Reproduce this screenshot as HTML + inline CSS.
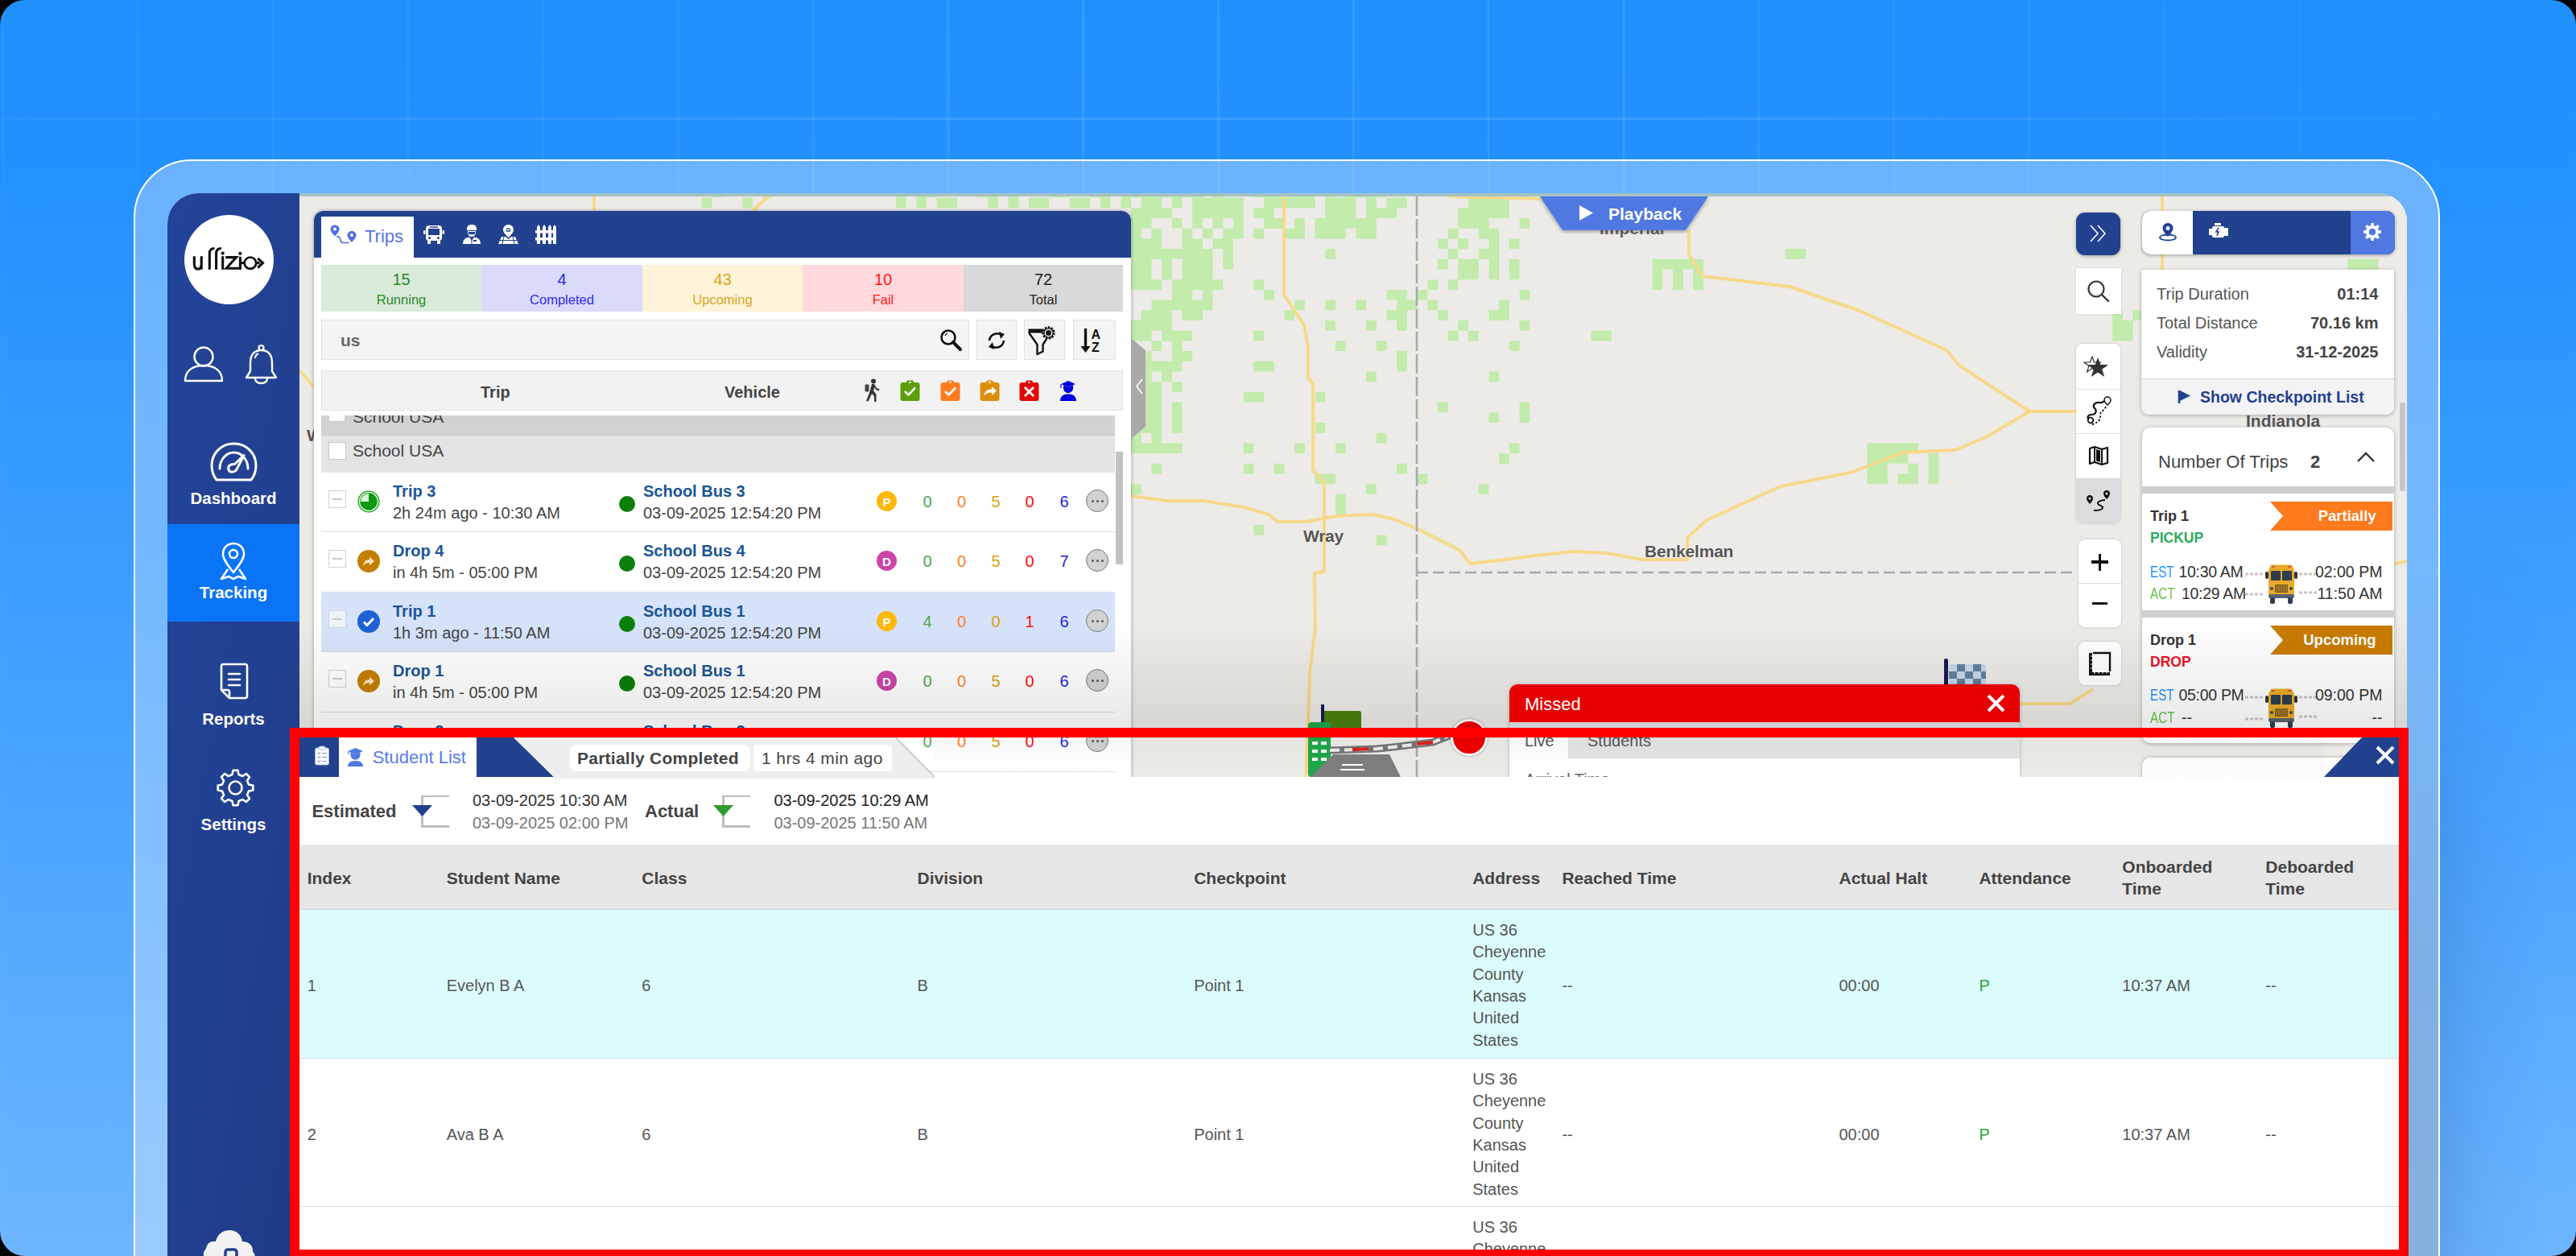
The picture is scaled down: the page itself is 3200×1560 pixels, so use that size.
<!DOCTYPE html>
<html><head><meta charset="utf-8">
<style>
*{box-sizing:border-box;margin:0;padding:0}
html,body{width:3200px;height:1560px;overflow:hidden;background:#000}
body{position:relative;font-family:"Liberation Sans",sans-serif;color:#444}
.a{position:absolute}
#bg{left:0;top:0;width:3200px;height:1560px;border-radius:31px;overflow:hidden;
 background:linear-gradient(180deg,#2190FF 0px,#2291FF 200px,#4AA5FF 1000px,#6DB5FF 1560px)}
.grid{left:1.5px;top:0;width:3200px;height:1560px;
 background-image:linear-gradient(90deg,rgba(255,255,255,.09) 0,rgba(255,255,255,.09) 3px,transparent 3px);
 background-size:167.8px 100%;-webkit-mask-image:linear-gradient(90deg,rgba(0,0,0,.3) 0,rgba(0,0,0,.55) 20%,#000 38%,#000 64%,rgba(0,0,0,.45) 80%,rgba(0,0,0,.12) 95%)}
.gridh{left:0;top:146px;width:3200px;height:3px;background:rgba(255,255,255,.12);-webkit-mask-image:linear-gradient(90deg,rgba(0,0,0,.3) 0,rgba(0,0,0,.55) 20%,#000 38%,#000 64%,rgba(0,0,0,.45) 80%,rgba(0,0,0,.12) 95%)}
.t{position:absolute;white-space:nowrap;line-height:1}
.sbt{color:#fff;font-weight:700;font-size:20.5px;width:164px;left:208px;text-align:center}
#lp{left:166px;top:198px;width:2865px;height:1700px;border:2px solid #fff;border-radius:72px;
 background:linear-gradient(180deg,#6AB2FF 0px,#74B8FF 500px,#9ACBFF 1362px,#9ACBFF 1700px)}
#app{left:208px;top:240px;width:2782px;height:1400px;border-radius:38px 35px 0 0;overflow:hidden;background:#EDEBE7}
#side{left:0;top:0;width:164px;height:1400px;background:linear-gradient(100deg,#23449A 0%,#22408F 60%,#1F3A86 100%)}
#map{left:164px;top:0;width:2618px;height:1400px;background:#EDEBE7;overflow:hidden;border-top:4px solid #A3C2C4}
</style></head><body>
<div id="bg" class="a"></div>
<div id="lp" class="a"></div>
<div class="a grid"></div><div class="a gridh"></div>
<div id="app" class="a">
 <div id="side" class="a"></div>
 <div id="map" class="a"></div>
</div>

<!-- SIDEBAR -->
<div class="a" style="left:208px;top:651px;width:164px;height:121px;background:#0A74F6"></div>
<div class="a" style="left:229px;top:267px;width:111px;height:111px;border-radius:50%;background:#fff"></div>
<svg class="a" style="left:225px;top:265px" width="120" height="120" viewBox="0 0 120 120"><g fill="none" stroke="#111" stroke-width="3.1">
<path d="M16.3 53.2V62.5C16.3 67.3 18.3 69.2 21 69.2C23.6 69.2 25.2 67.3 25.2 62.5M25.2 53.2V69.8"/>
<path d="M35.3 69.8V50C35.3 45.3 37.3 43.5 41.5 43.5"/><path d="M43.6 69.8V50C43.6 45.3 45.6 43.5 49.8 43.5"/>
<path d="M51.7 53.2V69.8"/><path d="M55.2 54.6H68.5L56.2 68.3H75"/><path d="M73.4 53.8V69.8"/>
<path d="M74.9 61.6H78.5"/><circle cx="85.9" cy="61.7" r="7.2" stroke-width="2.7"/><path d="M93 61.6H97.5"/><path d="M95.2 55.8L101.4 61.6L95.2 67.5" stroke-width="3.2"/></g>
<circle cx="51.7" cy="49.6" r="2.1" fill="#111"/><circle cx="73.3" cy="49.8" r="2.1" fill="#111"/></svg>
<svg class="a" style="left:227px;top:429px" width="52" height="46" viewBox="0 0 52 46"><circle cx="26" cy="14" r="11.5" fill="none" stroke="#fff" stroke-width="2.4"/><path d="M3 44 C3 31 13 25 26 25 C39 25 49 31 49 44 Z" fill="none" stroke="#fff" stroke-width="2.4" stroke-linejoin="round"/></svg>
<svg class="a" style="left:303px;top:427px" width="43" height="51" viewBox="0 0 43 51"><circle cx="21.5" cy="5" r="3" fill="none" stroke="#fff" stroke-width="2.2"/><path d="M21.5 8 C11 8 8 16 8 24 L8 34 L3 42 L40 42 L35 34 L35 24 C35 16 32 8 21.5 8 Z" fill="none" stroke="#fff" stroke-width="2.4" stroke-linejoin="round"/><path d="M14 43 C14 48 18 49 21.5 49 C25 49 29 48 29 43" fill="none" stroke="#fff" stroke-width="2.4"/><path d="M14 18 C14 15 16 13 18 12" fill="none" stroke="#fff" stroke-width="2"/></svg>
<svg class="a" style="left:261px;top:549px" width="59" height="50" viewBox="0 0 59 50"><path d="M8 47 L51 47 C55 42 57 36 57 29 C57 14 45 2 29.5 2 C14 2 2 14 2 29 C2 36 4 42 8 47 Z" fill="none" stroke="#fff" stroke-width="3" stroke-linejoin="round"/><path d="M12 33 C12 22 20 13 29.5 13 C39 13 47 22 47 33" fill="none" stroke="#fff" stroke-width="3" stroke-linecap="round"/><path d="M42 16.5 L33.5 33 C31.5 38 24.5 38.5 23 34.5 C21.5 30 25 27 30.5 27.5 Z" fill="none" stroke="#fff" stroke-width="3" stroke-linejoin="round"/></svg>
<div class="t sbt" style="top:609px;">Dashboard</div>
<svg class="a" style="left:272px;top:673px" width="36" height="50" viewBox="0 0 36 50"><path d="M18 38 C10 28 5 21 5 15 C5 7 11 2 18 2 C25 2 31 7 31 15 C31 21 26 28 18 38 Z" fill="none" stroke="#fff" stroke-width="2.6" stroke-linejoin="round"/><circle cx="18" cy="15" r="5" fill="none" stroke="#fff" stroke-width="2.6"/><path d="M11 34 L3 46 L12 43 L18 46 L24 43 L33 46 L25 34" fill="none" stroke="#fff" stroke-width="2.6" stroke-linejoin="round"/></svg>
<div class="t sbt" style="top:726px;">Tracking</div>
<svg class="a" style="left:271px;top:823px" width="40" height="47" viewBox="0 0 40 47"><path d="M4 4 C4 3 5 2 6 2 L34 2 C35 2 36 3 36 4 L36 42 C36 43 35 44 34 44 L14 44 L4 34 Z" fill="none" stroke="#fff" stroke-width="2.6" stroke-linejoin="round"/><path d="M4 34 L12 34 C13 34 14 35 14 36 L14 44" fill="none" stroke="#fff" stroke-width="2.6" stroke-linejoin="round"/><path d="M13 14 L27 14 M13 21 L27 21 M13 28 L27 28" stroke="#fff" stroke-width="2.6" stroke-linecap="round"/></svg>
<div class="t sbt" style="top:883px;">Reports</div>
<svg class="a" style="left:267px;top:953px" width="51" height="51" viewBox="0 0 51 51"><path d="M47.3 22.6 L47.3 28.4 L42.0 29.5 L40.0 34.4 L43.0 38.8 L38.8 43.0 L34.4 40.0 L29.5 42.0 L28.4 47.3 L22.6 47.3 L21.5 42.0 L16.6 40.0 L12.2 43.0 L8.0 38.8 L11.0 34.4 L9.0 29.5 L3.7 28.4 L3.7 22.6 L9.0 21.5 L11.0 16.6 L8.0 12.2 L12.2 8.0 L16.6 11.0 L21.5 9.0 L22.6 3.7 L28.4 3.7 L29.5 9.0 L34.4 11.0 L38.8 8.0 L43.0 12.2 L40.0 16.6 L42.0 21.5 Z" fill="none" stroke="#fff" stroke-width="2.6" stroke-linejoin="round"/><circle cx="25.5" cy="25.5" r="8" fill="none" stroke="#fff" stroke-width="2.6"/></svg>
<div class="t sbt" style="top:1014px;">Settings</div>
<svg class="a" style="left:250px;top:1525px" width="70" height="40" viewBox="0 0 70 40"><path d="M8 40 C2 38 1 30 6 26 C7 19 12 16 18 17 C20 8 27 3 35 3 C44 3 50 9 51 17 C59 17 65 22 64 30 C68 33 67 38 64 40 Z" fill="#F2F2F2"/><rect x="30" y="27" width="14" height="14" rx="3" fill="none" stroke="#22408F" stroke-width="3.5"/></svg>
<svg class="a" style="left:0;top:0;clip-path:inset(244px 210px 0 372px)" width="3200" height="1000"><path fill="#C2EBAC" d="M884.3 232.9h12.7v12.7h-12.7zM947.8 232.9h12.7v12.7h-12.7zM1112.9 232.9h12.7v12.7h-12.7zM1138.3 232.9h12.7v12.7h-12.7zM1151.0 232.9h12.7v12.7h-12.7zM1214.5 232.9h12.7v12.7h-12.7zM1227.2 232.9h12.7v12.7h-12.7zM1252.6 232.9h12.7v12.7h-12.7zM1303.4 232.9h12.7v12.7h-12.7zM1316.1 232.9h12.7v12.7h-12.7zM1354.2 232.9h12.7v12.7h-12.7zM1366.9 232.9h12.7v12.7h-12.7zM1392.3 232.9h12.7v12.7h-12.7zM1405.0 232.9h12.7v12.7h-12.7zM1417.7 232.9h12.7v12.7h-12.7zM1430.4 232.9h12.7v12.7h-12.7zM1443.1 232.9h12.7v12.7h-12.7zM1455.8 232.9h12.7v12.7h-12.7zM1468.5 232.9h12.7v12.7h-12.7zM1481.2 232.9h12.7v12.7h-12.7zM1506.6 232.9h12.7v12.7h-12.7zM1557.4 232.9h12.7v12.7h-12.7zM1570.1 232.9h12.7v12.7h-12.7zM1582.8 232.9h12.7v12.7h-12.7zM1595.5 232.9h12.7v12.7h-12.7zM1608.2 232.9h12.7v12.7h-12.7zM1620.9 232.9h12.7v12.7h-12.7zM1646.3 232.9h12.7v12.7h-12.7zM1671.7 232.9h12.7v12.7h-12.7zM1684.4 232.9h12.7v12.7h-12.7zM1697.1 232.9h12.7v12.7h-12.7zM1709.8 232.9h12.7v12.7h-12.7zM1811.4 232.9h12.7v12.7h-12.7zM1836.8 232.9h12.7v12.7h-12.7zM1849.5 232.9h12.7v12.7h-12.7zM1862.2 232.9h12.7v12.7h-12.7zM1887.6 232.9h12.7v12.7h-12.7zM871.6 245.6h12.7v12.7h-12.7zM922.4 245.6h12.7v12.7h-12.7zM1112.9 245.6h12.7v12.7h-12.7zM1138.3 245.6h12.7v12.7h-12.7zM1163.7 245.6h12.7v12.7h-12.7zM1176.4 245.6h12.7v12.7h-12.7zM1227.2 245.6h12.7v12.7h-12.7zM1252.6 245.6h12.7v12.7h-12.7zM1278.0 245.6h12.7v12.7h-12.7zM1290.7 245.6h12.7v12.7h-12.7zM1328.8 245.6h12.7v12.7h-12.7zM1341.5 245.6h12.7v12.7h-12.7zM1366.9 245.6h12.7v12.7h-12.7zM1392.3 245.6h12.7v12.7h-12.7zM1417.7 245.6h12.7v12.7h-12.7zM1430.4 245.6h12.7v12.7h-12.7zM1455.8 245.6h12.7v12.7h-12.7zM1481.2 245.6h12.7v12.7h-12.7zM1493.9 245.6h12.7v12.7h-12.7zM1506.6 245.6h12.7v12.7h-12.7zM1519.3 245.6h12.7v12.7h-12.7zM1532.0 245.6h12.7v12.7h-12.7zM1570.1 245.6h12.7v12.7h-12.7zM1582.8 245.6h12.7v12.7h-12.7zM1595.5 245.6h12.7v12.7h-12.7zM1608.2 245.6h12.7v12.7h-12.7zM1620.9 245.6h12.7v12.7h-12.7zM1646.3 245.6h12.7v12.7h-12.7zM1659.0 245.6h12.7v12.7h-12.7zM1671.7 245.6h12.7v12.7h-12.7zM1697.1 245.6h12.7v12.7h-12.7zM1722.5 245.6h12.7v12.7h-12.7zM1735.2 245.6h12.7v12.7h-12.7zM1824.1 245.6h12.7v12.7h-12.7zM1836.8 245.6h12.7v12.7h-12.7zM1849.5 245.6h12.7v12.7h-12.7zM1862.2 245.6h12.7v12.7h-12.7zM1405.0 258.3h12.7v12.7h-12.7zM1417.7 258.3h12.7v12.7h-12.7zM1430.4 258.3h12.7v12.7h-12.7zM1443.1 258.3h12.7v12.7h-12.7zM1481.2 258.3h12.7v12.7h-12.7zM1493.9 258.3h12.7v12.7h-12.7zM1506.6 258.3h12.7v12.7h-12.7zM1519.3 258.3h12.7v12.7h-12.7zM1532.0 258.3h12.7v12.7h-12.7zM1557.4 258.3h12.7v12.7h-12.7zM1570.1 258.3h12.7v12.7h-12.7zM1646.3 258.3h12.7v12.7h-12.7zM1659.0 258.3h12.7v12.7h-12.7zM1671.7 258.3h12.7v12.7h-12.7zM1697.1 258.3h12.7v12.7h-12.7zM1709.8 258.3h12.7v12.7h-12.7zM1722.5 258.3h12.7v12.7h-12.7zM1811.4 258.3h12.7v12.7h-12.7zM1824.1 258.3h12.7v12.7h-12.7zM1836.8 258.3h12.7v12.7h-12.7zM1849.5 258.3h12.7v12.7h-12.7zM1862.2 258.3h12.7v12.7h-12.7zM1405.0 271.0h12.7v12.7h-12.7zM1417.7 271.0h12.7v12.7h-12.7zM1455.8 271.0h12.7v12.7h-12.7zM1481.2 271.0h12.7v12.7h-12.7zM1506.6 271.0h12.7v12.7h-12.7zM1532.0 271.0h12.7v12.7h-12.7zM1570.1 271.0h12.7v12.7h-12.7zM1582.8 271.0h12.7v12.7h-12.7zM1608.2 271.0h12.7v12.7h-12.7zM1633.6 271.0h12.7v12.7h-12.7zM1646.3 271.0h12.7v12.7h-12.7zM1659.0 271.0h12.7v12.7h-12.7zM1671.7 271.0h12.7v12.7h-12.7zM1684.4 271.0h12.7v12.7h-12.7zM1697.1 271.0h12.7v12.7h-12.7zM1811.4 271.0h12.7v12.7h-12.7zM1824.1 271.0h12.7v12.7h-12.7zM1836.8 271.0h12.7v12.7h-12.7zM1887.6 271.0h12.7v12.7h-12.7zM1405.0 283.7h12.7v12.7h-12.7zM1430.4 283.7h12.7v12.7h-12.7zM1468.5 283.7h12.7v12.7h-12.7zM1493.9 283.7h12.7v12.7h-12.7zM1519.3 283.7h12.7v12.7h-12.7zM1532.0 283.7h12.7v12.7h-12.7zM1557.4 283.7h12.7v12.7h-12.7zM1595.5 283.7h12.7v12.7h-12.7zM1608.2 283.7h12.7v12.7h-12.7zM1633.6 283.7h12.7v12.7h-12.7zM1646.3 283.7h12.7v12.7h-12.7zM1659.0 283.7h12.7v12.7h-12.7zM1684.4 283.7h12.7v12.7h-12.7zM1697.1 283.7h12.7v12.7h-12.7zM1798.7 283.7h12.7v12.7h-12.7zM1836.8 283.7h12.7v12.7h-12.7zM1849.5 283.7h12.7v12.7h-12.7zM1405.0 296.4h12.7v12.7h-12.7zM1417.7 296.4h12.7v12.7h-12.7zM1430.4 296.4h12.7v12.7h-12.7zM1468.5 296.4h12.7v12.7h-12.7zM1481.2 296.4h12.7v12.7h-12.7zM1506.6 296.4h12.7v12.7h-12.7zM1519.3 296.4h12.7v12.7h-12.7zM1786.0 296.4h12.7v12.7h-12.7zM1811.4 296.4h12.7v12.7h-12.7zM1849.5 296.4h12.7v12.7h-12.7zM1874.9 296.4h12.7v12.7h-12.7zM1405.0 309.1h12.7v12.7h-12.7zM1417.7 309.1h12.7v12.7h-12.7zM1430.4 309.1h12.7v12.7h-12.7zM1443.1 309.1h12.7v12.7h-12.7zM1455.8 309.1h12.7v12.7h-12.7zM1468.5 309.1h12.7v12.7h-12.7zM1481.2 309.1h12.7v12.7h-12.7zM1493.9 309.1h12.7v12.7h-12.7zM1519.3 309.1h12.7v12.7h-12.7zM1646.3 309.1h12.7v12.7h-12.7zM1798.7 309.1h12.7v12.7h-12.7zM1836.8 309.1h12.7v12.7h-12.7zM1849.5 309.1h12.7v12.7h-12.7zM2217.8 309.1h12.7v12.7h-12.7zM2230.5 309.1h12.7v12.7h-12.7zM1405.0 321.8h12.7v12.7h-12.7zM1417.7 321.8h12.7v12.7h-12.7zM1443.1 321.8h12.7v12.7h-12.7zM1468.5 321.8h12.7v12.7h-12.7zM1481.2 321.8h12.7v12.7h-12.7zM1493.9 321.8h12.7v12.7h-12.7zM1519.3 321.8h12.7v12.7h-12.7zM1786.0 321.8h12.7v12.7h-12.7zM1811.4 321.8h12.7v12.7h-12.7zM1824.1 321.8h12.7v12.7h-12.7zM1849.5 321.8h12.7v12.7h-12.7zM1874.9 321.8h12.7v12.7h-12.7zM2052.7 321.8h12.7v12.7h-12.7zM2065.4 321.8h12.7v12.7h-12.7zM2078.1 321.8h12.7v12.7h-12.7zM2090.8 321.8h12.7v12.7h-12.7zM2103.5 321.8h12.7v12.7h-12.7zM2916.3 321.8h12.7v12.7h-12.7zM2929.0 321.8h12.7v12.7h-12.7zM2941.7 321.8h12.7v12.7h-12.7zM1405.0 334.5h12.7v12.7h-12.7zM1417.7 334.5h12.7v12.7h-12.7zM1443.1 334.5h12.7v12.7h-12.7zM1468.5 334.5h12.7v12.7h-12.7zM1481.2 334.5h12.7v12.7h-12.7zM1493.9 334.5h12.7v12.7h-12.7zM1811.4 334.5h12.7v12.7h-12.7zM1824.1 334.5h12.7v12.7h-12.7zM1849.5 334.5h12.7v12.7h-12.7zM1874.9 334.5h12.7v12.7h-12.7zM2052.7 334.5h12.7v12.7h-12.7zM2078.1 334.5h12.7v12.7h-12.7zM2103.5 334.5h12.7v12.7h-12.7zM1405.0 347.2h12.7v12.7h-12.7zM1417.7 347.2h12.7v12.7h-12.7zM1430.4 347.2h12.7v12.7h-12.7zM1455.8 347.2h12.7v12.7h-12.7zM1468.5 347.2h12.7v12.7h-12.7zM1481.2 347.2h12.7v12.7h-12.7zM1493.9 347.2h12.7v12.7h-12.7zM1506.6 347.2h12.7v12.7h-12.7zM1557.4 347.2h12.7v12.7h-12.7zM1773.3 347.2h12.7v12.7h-12.7zM1798.7 347.2h12.7v12.7h-12.7zM2052.7 347.2h12.7v12.7h-12.7zM2078.1 347.2h12.7v12.7h-12.7zM2103.5 347.2h12.7v12.7h-12.7zM1455.8 359.9h12.7v12.7h-12.7zM1468.5 359.9h12.7v12.7h-12.7zM1493.9 359.9h12.7v12.7h-12.7zM1570.1 359.9h12.7v12.7h-12.7zM1722.5 359.9h12.7v12.7h-12.7zM1735.2 359.9h12.7v12.7h-12.7zM1760.6 359.9h12.7v12.7h-12.7zM1887.6 359.9h12.7v12.7h-12.7zM1430.4 372.6h12.7v12.7h-12.7zM1443.1 372.6h12.7v12.7h-12.7zM1455.8 372.6h12.7v12.7h-12.7zM1468.5 372.6h12.7v12.7h-12.7zM1481.2 372.6h12.7v12.7h-12.7zM1493.9 372.6h12.7v12.7h-12.7zM1608.2 372.6h12.7v12.7h-12.7zM1646.3 372.6h12.7v12.7h-12.7zM1684.4 372.6h12.7v12.7h-12.7zM1735.2 372.6h12.7v12.7h-12.7zM1747.9 372.6h12.7v12.7h-12.7zM1773.3 372.6h12.7v12.7h-12.7zM1862.2 372.6h12.7v12.7h-12.7zM1417.7 385.3h12.7v12.7h-12.7zM1430.4 385.3h12.7v12.7h-12.7zM1443.1 385.3h12.7v12.7h-12.7zM1468.5 385.3h12.7v12.7h-12.7zM1481.2 385.3h12.7v12.7h-12.7zM1595.5 385.3h12.7v12.7h-12.7zM1722.5 385.3h12.7v12.7h-12.7zM1735.2 385.3h12.7v12.7h-12.7zM1786.0 385.3h12.7v12.7h-12.7zM1849.5 385.3h12.7v12.7h-12.7zM1862.2 385.3h12.7v12.7h-12.7zM2624.2 385.3h12.7v12.7h-12.7zM2649.6 385.3h12.7v12.7h-12.7zM1405.0 398.0h12.7v12.7h-12.7zM1417.7 398.0h12.7v12.7h-12.7zM1430.4 398.0h12.7v12.7h-12.7zM1443.1 398.0h12.7v12.7h-12.7zM1646.3 398.0h12.7v12.7h-12.7zM1697.1 398.0h12.7v12.7h-12.7zM1735.2 398.0h12.7v12.7h-12.7zM1811.4 398.0h12.7v12.7h-12.7zM1887.6 398.0h12.7v12.7h-12.7zM2624.2 398.0h12.7v12.7h-12.7zM2636.9 398.0h12.7v12.7h-12.7zM1405.0 410.7h12.7v12.7h-12.7zM1417.7 410.7h12.7v12.7h-12.7zM1443.1 410.7h12.7v12.7h-12.7zM1455.8 410.7h12.7v12.7h-12.7zM1468.5 410.7h12.7v12.7h-12.7zM1557.4 410.7h12.7v12.7h-12.7zM1798.7 410.7h12.7v12.7h-12.7zM1824.1 410.7h12.7v12.7h-12.7zM1976.5 410.7h12.7v12.7h-12.7zM1989.2 410.7h12.7v12.7h-12.7zM2624.2 410.7h12.7v12.7h-12.7zM2636.9 410.7h12.7v12.7h-12.7zM1430.4 423.4h12.7v12.7h-12.7zM1455.8 423.4h12.7v12.7h-12.7zM1659.0 423.4h12.7v12.7h-12.7zM1709.8 423.4h12.7v12.7h-12.7zM1874.9 423.4h12.7v12.7h-12.7zM1405.0 436.1h12.7v12.7h-12.7zM1417.7 436.1h12.7v12.7h-12.7zM1455.8 436.1h12.7v12.7h-12.7zM1468.5 436.1h12.7v12.7h-12.7zM1735.2 436.1h12.7v12.7h-12.7zM1417.7 448.8h12.7v12.7h-12.7zM1430.4 448.8h12.7v12.7h-12.7zM1443.1 448.8h12.7v12.7h-12.7zM1455.8 448.8h12.7v12.7h-12.7zM1557.4 448.8h12.7v12.7h-12.7zM1570.1 448.8h12.7v12.7h-12.7zM1735.2 448.8h12.7v12.7h-12.7zM1405.0 461.5h12.7v12.7h-12.7zM1417.7 461.5h12.7v12.7h-12.7zM1443.1 461.5h12.7v12.7h-12.7zM1697.1 461.5h12.7v12.7h-12.7zM1849.5 461.5h12.7v12.7h-12.7zM1405.0 474.2h12.7v12.7h-12.7zM1417.7 474.2h12.7v12.7h-12.7zM1430.4 474.2h12.7v12.7h-12.7zM1455.8 474.2h12.7v12.7h-12.7zM1405.0 486.9h12.7v12.7h-12.7zM1417.7 486.9h12.7v12.7h-12.7zM1430.4 486.9h12.7v12.7h-12.7zM1544.7 486.9h12.7v12.7h-12.7zM1557.4 486.9h12.7v12.7h-12.7zM1633.6 486.9h12.7v12.7h-12.7zM1405.0 499.6h12.7v12.7h-12.7zM1417.7 499.6h12.7v12.7h-12.7zM1430.4 499.6h12.7v12.7h-12.7zM1455.8 499.6h12.7v12.7h-12.7zM1786.0 499.6h12.7v12.7h-12.7zM1887.6 499.6h12.7v12.7h-12.7zM1405.0 512.3h12.7v12.7h-12.7zM1417.7 512.3h12.7v12.7h-12.7zM1430.4 512.3h12.7v12.7h-12.7zM1455.8 512.3h12.7v12.7h-12.7zM1849.5 512.3h12.7v12.7h-12.7zM1887.6 512.3h12.7v12.7h-12.7zM1405.0 525.0h12.7v12.7h-12.7zM1417.7 525.0h12.7v12.7h-12.7zM1430.4 525.0h12.7v12.7h-12.7zM1455.8 525.0h12.7v12.7h-12.7zM1633.6 525.0h12.7v12.7h-12.7zM1405.0 537.7h12.7v12.7h-12.7zM1430.4 537.7h12.7v12.7h-12.7zM1709.8 537.7h12.7v12.7h-12.7zM1405.0 550.4h12.7v12.7h-12.7zM1417.7 550.4h12.7v12.7h-12.7zM1430.4 550.4h12.7v12.7h-12.7zM1443.1 550.4h12.7v12.7h-12.7zM1455.8 550.4h12.7v12.7h-12.7zM1544.7 550.4h12.7v12.7h-12.7zM1608.2 550.4h12.7v12.7h-12.7zM1659.0 550.4h12.7v12.7h-12.7zM1874.9 550.4h12.7v12.7h-12.7zM2319.4 550.4h12.7v12.7h-12.7zM2332.1 550.4h12.7v12.7h-12.7zM2344.8 550.4h12.7v12.7h-12.7zM2357.5 550.4h12.7v12.7h-12.7zM2370.2 550.4h12.7v12.7h-12.7zM1862.2 563.1h12.7v12.7h-12.7zM2319.4 563.1h12.7v12.7h-12.7zM2332.1 563.1h12.7v12.7h-12.7zM2344.8 563.1h12.7v12.7h-12.7zM2357.5 563.1h12.7v12.7h-12.7zM2395.6 563.1h12.7v12.7h-12.7zM1430.4 575.8h12.7v12.7h-12.7zM1544.7 575.8h12.7v12.7h-12.7zM1582.8 575.8h12.7v12.7h-12.7zM1735.2 575.8h12.7v12.7h-12.7zM2319.4 575.8h12.7v12.7h-12.7zM2332.1 575.8h12.7v12.7h-12.7zM2370.2 575.8h12.7v12.7h-12.7zM2395.6 575.8h12.7v12.7h-12.7zM1633.6 588.5h12.7v12.7h-12.7zM1646.3 588.5h12.7v12.7h-12.7zM1760.6 588.5h12.7v12.7h-12.7zM2319.4 588.5h12.7v12.7h-12.7zM2332.1 588.5h12.7v12.7h-12.7zM2357.5 588.5h12.7v12.7h-12.7zM2370.2 588.5h12.7v12.7h-12.7zM2395.6 588.5h12.7v12.7h-12.7zM1405.0 601.2h12.7v12.7h-12.7zM1697.1 601.2h12.7v12.7h-12.7zM1836.8 601.2h12.7v12.7h-12.7zM1659.0 613.9h12.7v12.7h-12.7zM1659.0 626.6h12.7v12.7h-12.7zM1557.4 652.0h12.7v12.7h-12.7zM1709.8 664.7h12.7v12.7h-12.7z"/><g fill="none" stroke="#F8D98A" stroke-width="4" stroke-linejoin="round"><polyline points="1595,244 1595,366 1620,404 1625,431 1625,469 1631,477 1631,584 1645,599 1645,710 1633,712 1634,781 1627,836 1622,980"/><polyline points="372,460 390,481"/><polyline points="738,244 738,262"/><polyline points="935,262 950,248 956,244"/><polyline points="1405,616 1450,622 1495,622 1545,630 1576,639 1587,648 1622,648 1660,641 1706,639 1732,645 1759,656 1813,683 1826,700 1870,695 1908,690 1954,685 1996,687 2039,695 2096,695 2096,668 2120,646 2212,604 2299,587 2364,562 2429,559 2467,543 2521,511 2580,511"/><polyline points="2098,286 2098,316 2115,343 2223,356 2310,386 2418,435 2434,454 2521,511"/><polyline points="1800,244 1914,247"/><polyline points="2400,874 2571,874 2600,856"/><polyline points="2686,244 2686,340"/><polyline points="2975,700 2990,697"/></g><path d="M1760 244L1760 980" stroke="#A7A7AE" stroke-width="2.5" stroke-dasharray="24 4"/><path d="M1760 711L2580 711" stroke="#A7A7AE" stroke-width="2.5" stroke-dasharray="14 6"/></svg>
<div class="t" style="left:1619px;top:655.2px;font-size:21px;color:#555;font-weight:700;letter-spacing:-0.3px;text-shadow:0 0 2px #fff">Wray</div>
<div class="t" style="left:2043px;top:674.2px;font-size:21px;color:#555;font-weight:700;letter-spacing:-0.2px;text-shadow:0 0 2px #fff">Benkelman</div>
<div class="t" style="left:1987px;top:273.2px;font-size:21px;color:#666;font-weight:700;">Imperial</div>
<div class="t" style="left:2790px;top:512.2px;font-size:21px;color:#555;font-weight:700;">Indianola</div>
<div class="t" style="left:381px;top:530.2px;font-size:21px;color:#555;font-weight:700;">W</div>
<svg class="a" style="left:1615px;top:875px" width="130" height="90" viewBox="0 0 130 90"><rect x="28" y="8" width="48" height="33" rx="3" fill="#4A800F"/><rect x="26" y="0" width="4" height="45" fill="#1A1A50"/><rect x="10" y="22" width="28" height="68" rx="4" fill="#1FA84A"/><g fill="#fff"><rect x="15" y="46" width="7" height="4"/><rect x="26" y="46" width="7" height="4"/><rect x="15" y="56" width="7" height="4"/><rect x="26" y="56" width="7" height="4"/><rect x="15" y="66" width="7" height="4"/><rect x="26" y="66" width="7" height="4"/></g><path d="M13 90L41 62L111 62L125 90Z" fill="#7E7E7E"/><path d="M52 75L78 75M50 81L80 81" stroke="#fff" stroke-width="2"/></svg>
<svg class="a" style="left:1650px;top:900px" width="190" height="40" viewBox="0 0 190 40"><path d="M2 32L60 30L80 28L130 22L150 14L178 14" fill="none" stroke="#777" stroke-width="9" stroke-linejoin="round"/><path d="M2 32L60 30L80 28L130 22L150 14L178 14" fill="none" stroke="#eee" stroke-width="4" stroke-dasharray="12 6" stroke-linejoin="round"/><path d="M30 31L50 30" stroke="#E02020" stroke-width="4"/><path d="M110 24L130 22" stroke="#E02020" stroke-width="4"/></svg>
<div class="a" style="left:1802px;top:893px;width:46px;height:46px;background:#EE0000;border:3px solid #fff;border-radius:50%;box-shadow:0 0 3px rgba(0,0,0,.4)"></div>
<div class="a" style="left:1823px;top:904px;width:3px;height:10px;background:#fff"></div>
<svg class="a" style="left:2415px;top:818px" width="58" height="34" viewBox="0 0 58 34"><rect x="0" y="0" width="5" height="34" rx="2" fill="#1A1A50"/><g><rect x="6" y="7" width="46" height="27" rx="4" fill="#C8D6EA"/><g fill="#65809F"><rect x="16" y="7" width="10" height="9"/><rect x="36" y="7" width="10" height="9"/><rect x="6" y="16" width="10" height="9"/><rect x="26" y="16" width="10" height="9"/><rect x="46" y="16" width="6" height="9"/><rect x="16" y="25" width="10" height="9"/><rect x="36" y="25" width="10" height="9"/></g></g></svg>
<svg class="a" style="left:1905px;top:244px" width="225" height="46" viewBox="0 0 225 46"><defs><filter id="sh" x="-10%" y="-20%" width="120%" height="160%"><feDropShadow dx="0" dy="2" stdDeviation="2.5" flood-opacity=".35"/></filter></defs><path d="M8 0L217 0L189 41.7L36 41.7Z" fill="#4F78E0" filter="url(#sh)"/></svg>
<svg class="a" style="left:1961px;top:255px" width="20" height="20" viewBox="0 0 20 20"><path d="M1 0L18 9.5L1 19Z" fill="#fff"/></svg>
<div class="t" style="left:1998px;top:255.2px;font-size:21px;color:#fff;font-weight:700;">Playback</div>
<div class="a" style="left:390px;top:262px;width:1015px;height:760px;background:#fff;border-radius:12px 12px 0 0;box-shadow:0 0 5px rgba(0,0,0,.35)"></div>
<div class="a" style="left:390px;top:262px;width:1015px;height:58px;background:#22418F;border-radius:12px 12px 0 0"></div>
<div class="a" style="left:399px;top:269px;width:115px;height:51px;background:#fff"></div>
<svg class="a" style="left:409px;top:278px" width="36" height="26" viewBox="0 0 36 26"><path d="M7 1.5C3.7 1.5 1.5 4 1.5 6.8C1.5 10 7 15.5 7 15.5C7 15.5 12.5 10 12.5 6.8C12.5 4 10.3 1.5 7 1.5Z" fill="#4F6FE0"/><circle cx="7" cy="6.6" r="2" fill="#fff"/>
<path d="M28 9C24.7 9 22.5 11.5 22.5 14.3C22.5 17.5 28 23 28 23C28 23 33.5 17.5 33.5 14.3C33.5 11.5 31.3 9 28 9Z" fill="#4F6FE0"/><circle cx="28" cy="14.1" r="2" fill="#fff"/>
<path d="M9 16C12 15 13 17 13.5 19C14 22 16 24 19 23.5L25 23.5" fill="none" stroke="#4F6FE0" stroke-width="1.6"/></svg>
<div class="t" style="left:453px;top:282.9px;font-size:22px;color:#5A74E8;">Trips</div>
<svg class="a" style="left:525px;top:278px" width="28" height="26" viewBox="0 0 28 26"><rect x="4" y="2" width="20" height="19" rx="4" fill="#fff"/><rect x="7" y="6" width="14" height="8" fill="#22418F"/><rect x="9" y="3.3" width="10" height="1.5" fill="#22418F"/>
<circle cx="8.5" cy="17.5" r="1.5" fill="#22418F"/><circle cx="19.5" cy="17.5" r="1.5" fill="#22418F"/><rect x="6" y="21" width="4" height="4" fill="#fff"/><rect x="18" y="21" width="4" height="4" fill="#fff"/>
<rect x="1" y="8" width="2.5" height="5" rx="1" fill="#fff"/><rect x="24.5" y="8" width="2.5" height="5" rx="1" fill="#fff"/></svg>
<svg class="a" style="left:574px;top:278px" width="24" height="26" viewBox="0 0 24 26"><path d="M6 6C6 2.5 8.5 1 12 1C15.5 1 18 2.5 18 6L18 8L6 8Z" fill="#fff"/><path d="M7 9L17 9C17 14 15 16 12 16C9 16 7 14 7 9Z" fill="#fff"/><rect x="8" y="10" width="8" height="3" fill="#22418F"/>
<path d="M1 25C1 19 5 17 9 16.5L12 21L15 16.5C19 17 23 19 23 25Z" fill="#fff"/><rect x="14" y="20" width="4" height="2" fill="#22418F"/><path d="M12 17L12 25" stroke="#22418F" stroke-width="1"/></svg>
<svg class="a" style="left:618px;top:278px" width="27" height="26" viewBox="0 0 27 26"><path d="M13.5 1C9.5 1 7 4 7 7.5C7 11.5 13.5 17 13.5 17C13.5 17 20 11.5 20 7.5C20 4 17.5 1 13.5 1Z" fill="#fff"/><circle cx="13.5" cy="7.5" r="2.6" fill="#22418F"/><circle cx="13.5" cy="7.5" r="1.3" fill="#fff"/>
<path d="M1 25L5 16L10 16L13.5 19L17 16L22 16L26 25Z" fill="#fff"/><path d="M8 16L6 25M19 16L21 25M3 20.5L24 20.5" stroke="#22418F" stroke-width="1"/></svg>
<svg class="a" style="left:665px;top:278px" width="26" height="26" viewBox="0 0 26 26"><g fill="#fff"><path d="M2 4L4 1L6 4L6 25L2 25Z"/><path d="M9 4L11 1L13 4L13 25L9 25Z"/><path d="M16 4L18 1L20 4L20 25L16 25Z"/><path d="M22 4L24 1L26 4L26 25L22 25Z"/><rect x="0" y="8" width="26" height="3.5"/><rect x="0" y="17" width="26" height="3.5"/></g></svg>
<div class="a" style="left:399px;top:329px;width:199px;height:58px;background:#D9EBD9"></div>
<div class="t" style="left:348.5px;width:300px;text-align:center;top:336.6px;font-size:20px;color:#2A8A2A;">15</div>
<div class="t" style="left:348.5px;width:300px;text-align:center;top:364.0px;font-size:16.5px;color:#2A8A2A;">Running</div>
<div class="a" style="left:598px;top:329px;width:200px;height:58px;background:#DADAFB"></div>
<div class="t" style="left:548.0px;width:300px;text-align:center;top:336.6px;font-size:20px;color:#2B2BEA;">4</div>
<div class="t" style="left:548.0px;width:300px;text-align:center;top:364.0px;font-size:16.5px;color:#2B2BEA;">Completed</div>
<div class="a" style="left:798px;top:329px;width:199px;height:58px;background:#FFF3D9"></div>
<div class="t" style="left:747.5px;width:300px;text-align:center;top:336.6px;font-size:20px;color:#D9A520;">43</div>
<div class="t" style="left:747.5px;width:300px;text-align:center;top:364.0px;font-size:16.5px;color:#D9A520;">Upcoming</div>
<div class="a" style="left:997px;top:329px;width:200px;height:58px;background:#FFD9DB"></div>
<div class="t" style="left:947.0px;width:300px;text-align:center;top:336.6px;font-size:20px;color:#FF1515;">10</div>
<div class="t" style="left:947.0px;width:300px;text-align:center;top:364.0px;font-size:16.5px;color:#FF1515;">Fail</div>
<div class="a" style="left:1197px;top:329px;width:198px;height:58px;background:#D9D9D9"></div>
<div class="t" style="left:1146.0px;width:300px;text-align:center;top:336.6px;font-size:20px;color:#222;">72</div>
<div class="t" style="left:1146.0px;width:300px;text-align:center;top:364.0px;font-size:16.5px;color:#222;">Total</div>
<div class="a" style="left:399px;top:397px;width:805px;height:50px;background:#F4F4F4;border:1px solid #E2E2E2"></div>
<div class="t" style="left:423px;top:412.2px;font-size:21px;color:#666;font-weight:700;">us</div>
<svg class="a" style="left:1167px;top:408px" width="30" height="30" viewBox="0 0 30 30"><circle cx="11" cy="11" r="8.5" fill="none" stroke="#111" stroke-width="2.6"/><path d="M17 17L26 26" stroke="#111" stroke-width="4" stroke-linecap="round"/><path d="M7 9A5 5 0 0 1 10 6" stroke="#111" stroke-width="1.2" fill="none"/></svg>
<div class="a" style="left:1213px;top:397px;width:50px;height:50px;background:#F4F4F4;border:1px solid #E2E2E2"></div>
<div class="a" style="left:1272px;top:397px;width:51px;height:50px;background:#F4F4F4;border:1px solid #E2E2E2"></div>
<div class="a" style="left:1333px;top:397px;width:53px;height:50px;background:#F4F4F4;border:1px solid #E2E2E2"></div>
<svg class="a" style="left:1225px;top:409px" width="26" height="28" viewBox="0 0 26 28"><path d="M20 8A9.5 9.5 0 0 0 4 14" fill="none" stroke="#111" stroke-width="2.6"/><path d="M6 20A9.5 9.5 0 0 0 22 14" fill="none" stroke="#111" stroke-width="2.6"/><path d="M16 3L23 6L18 12Z" fill="#111"/><path d="M10 25L3 22L8 16Z" fill="#111"/></svg>
<svg class="a" style="left:1275px;top:403px" width="40" height="40" viewBox="0 0 40 40"><rect x="2.5" y="5.5" width="18" height="5" fill="#111"/><path d="M3 10L13.5 25L13.5 37L20.5 33.5L20.5 25L25 18" fill="none" stroke="#111" stroke-width="2.4" stroke-linejoin="round"/><circle cx="27.5" cy="10.5" r="7" fill="none" stroke="#111" stroke-width="2.4" stroke-dasharray="2.6 1.4"/><circle cx="27.5" cy="10.5" r="5.6" fill="none" stroke="#111" stroke-width="1.4"/><circle cx="27.5" cy="10.5" r="3.4" fill="#111"/></svg>
<svg class="a" style="left:1341px;top:403px" width="36" height="40" viewBox="0 0 36 40"><path d="M7.5 5L7.5 31" stroke="#111" stroke-width="3.4"/><path d="M1.5 27L7.5 35L13.5 27Z" fill="#111"/><text x="14.5" y="17.6" font-family="Liberation Sans" font-weight="700" font-size="16" fill="#111">A</text><text x="15" y="34" font-family="Liberation Sans" font-weight="700" font-size="16" fill="#111">Z</text></svg>
<div class="a" style="left:399px;top:460px;width:996px;height:50px;background:#F2F2F2;border:1px solid #E3E3E3"></div>
<div class="t" style="left:597px;top:477.1px;font-size:20px;color:#444;font-weight:700;">Trip</div>
<div class="t" style="left:900px;top:477.1px;font-size:20px;color:#444;font-weight:700;">Vehicle</div>
<svg class="a" style="left:1071px;top:470px" width="24" height="30" viewBox="0 0 24 30"><circle cx="14" cy="3.5" r="3" fill="#333"/><path d="M12 7L9 18L5 28L7.5 28.5L12 19L15 22L15 29L17.5 29L17.5 20L14 15L15.5 11L17 14L21 15.5L21.5 13.5L18 12L15 7Z" fill="#333"/><rect x="3.5" y="7.5" width="5" height="9" rx="1" fill="#444"/></svg>
<svg class="a" style="left:1118px;top:471px" width="25" height="28" viewBox="0 0 25 28"><rect x="0.5" y="4" width="24" height="23" rx="3" fill="#5C9E0C"/><rect x="8" y="1.5" width="9" height="5" rx="2" fill="#5C9E0C"/><circle cx="12.5" cy="4" r="1.2" fill="#fff"/><path d="M6 15L10.5 19.5L19 10.5" fill="none" stroke="#fff" stroke-width="2.6"/></svg>
<svg class="a" style="left:1168px;top:471px" width="25" height="28" viewBox="0 0 25 28"><rect x="0.5" y="4" width="24" height="23" rx="3" fill="#FF7A1F"/><rect x="8" y="1.5" width="9" height="5" rx="2" fill="#FF7A1F"/><circle cx="12.5" cy="4" r="1.2" fill="#fff"/><path d="M6 15L10.5 19.5L19 10.5" fill="none" stroke="#fff" stroke-width="2.6"/></svg>
<svg class="a" style="left:1217px;top:471px" width="25" height="28" viewBox="0 0 25 28"><rect x="0.5" y="4" width="24" height="23" rx="3" fill="#DE8F0A"/><rect x="8" y="1.5" width="9" height="5" rx="2" fill="#DE8F0A"/><circle cx="12.5" cy="4" r="1.2" fill="#fff"/><path d="M5 21C6 15 10 12.5 15 12.5L15 9L21 14.5L15 20L15 16.5C10 16.5 7 18 5 21Z" fill="#fff"/></svg>
<svg class="a" style="left:1266px;top:471px" width="25" height="28" viewBox="0 0 25 28"><rect x="0.5" y="4" width="24" height="23" rx="3" fill="#E20808"/><rect x="8" y="1.5" width="9" height="5" rx="2" fill="#E20808"/><circle cx="12.5" cy="4" r="1.2" fill="#fff"/><path d="M7 10L18 21M18 10L7 21" stroke="#fff" stroke-width="2.8"/></svg>
<svg class="a" style="left:1316px;top:471px" width="22" height="28" viewBox="0 0 22 28"><path d="M2 6L11 2L20 6L11 10Z" fill="#0000E0"/><path d="M5 7.5L5 11C5 14.5 7.5 17 11 17C14.5 17 17 14.5 17 11L17 7.5L11 10Z" fill="#0000E0"/><path d="M2 6L2 11" stroke="#0000E0" stroke-width="1.2"/><path d="M1 27C1 21 5 18.5 11 18.5C17 18.5 21 21 21 27Z" fill="#0000E0"/></svg>
<div class="a" style="left:0;top:0;width:3200px;height:1560px;clip-path:inset(516px 1795px 0 399px)">
<div class="a" style="left:399px;top:516px;width:986px;height:24px;background:#D2D2D2"></div>
<div class="a" style="left:408px;top:503px;width:21px;height:21px;background:#fff;border:1px solid #C9C9C9"></div>
<div class="t" style="left:438px;top:507.2px;font-size:21px;color:#444;">School USA</div>
<div class="a" style="left:399px;top:540px;width:986px;height:47px;background:#E4E4E4;border-top:1px solid #CBCBCB"></div>
<div class="a" style="left:408px;top:549px;width:22px;height:22px;background:#fff;border:1px solid #C5C9D0"></div>
<div class="t" style="left:438px;top:549.2px;font-size:21px;color:#444;">School USA</div>
<div class="a" style="left:1385px;top:540px;width:10px;height:420px;background:#fff"></div>
<div class="a" style="left:1386px;top:561px;width:9px;height:140px;background:#C2C2C2"></div>
<div class="a" style="left:399px;top:587px;width:986px;height:74px;background:#fff;border-bottom:1px solid #DCDCDC"></div>
<div class="a" style="left:408px;top:609px;width:22px;height:22px;background:#fff;border:1px solid #D0D3D8"></div>
<div class="a" style="left:413px;top:619px;width:12px;height:1.5px;background:#C8C8C8"></div>
<svg class="a" style="left:443px;top:608px" width="30" height="30" viewBox="0 0 30 30"><circle cx="15" cy="15" r="13.5" fill="#0E9A0E"/><circle cx="15" cy="15" r="11.5" fill="none" stroke="#D8F5D8" stroke-width="1.6"/><path d="M15 15L15 5A10 10 0 0 0 5 15Z" fill="#D8F5D8"/></svg>
<div class="t" style="left:488px;top:600.1px;font-size:20px;color:#1A5596;font-weight:700;">Trip 3</div>
<div class="t" style="left:488px;top:627.1px;font-size:20px;color:#444;">2h 24m ago - 10:30 AM</div>
<div class="a" style="left:769px;top:616px;width:20px;height:20px;background:#0A7F0A;border-radius:50%"></div>
<div class="t" style="left:799px;top:600.1px;font-size:20px;color:#1A5596;font-weight:700;">School Bus 3</div>
<div class="t" style="left:799px;top:627.1px;font-size:20px;color:#444;">03-09-2025 12:54:20 PM</div>
<div class="a" style="left:1089px;top:610px;width:25px;height:25px;background:#FFB808;border-radius:50%"></div>
<div class="t" style="left:1089.0px;width:25px;text-align:center;top:616.3px;font-size:15px;color:#fff;font-weight:700;">P</div>
<div class="t" style="left:1137.0px;width:30px;text-align:center;top:613.1px;font-size:20px;color:#4DA64D;">0</div>
<div class="t" style="left:1179.5px;width:30px;text-align:center;top:613.1px;font-size:20px;color:#FF7F27;">0</div>
<div class="t" style="left:1222.0px;width:30px;text-align:center;top:613.1px;font-size:20px;color:#D9A010;">5</div>
<div class="t" style="left:1264.0px;width:30px;text-align:center;top:613.1px;font-size:20px;color:#FF0A0A;">0</div>
<div class="t" style="left:1307.0px;width:30px;text-align:center;top:613.1px;font-size:20px;color:#2323E8;">6</div>
<div class="a" style="left:1349px;top:608px;width:28px;height:28px;background:#D2D2D2;border:1.5px solid #7A7A7A;border-radius:50%"></div>
<div class="a" style="left:1355.5px;top:621px;width:3px;height:3px;background:#555;border-radius:50%"></div>
<div class="a" style="left:1361.5px;top:621px;width:3px;height:3px;background:#555;border-radius:50%"></div>
<div class="a" style="left:1367.5px;top:621px;width:3px;height:3px;background:#555;border-radius:50%"></div>
<div class="a" style="left:399px;top:661px;width:986px;height:75px;background:#fff;border-bottom:1px solid #DCDCDC"></div>
<div class="a" style="left:408px;top:683px;width:22px;height:22px;background:#fff;border:1px solid #D0D3D8"></div>
<div class="a" style="left:413px;top:693px;width:12px;height:1.5px;background:#C8C8C8"></div>
<svg class="a" style="left:443px;top:682px" width="30" height="30" viewBox="0 0 30 30"><circle cx="15" cy="15" r="14" fill="#C47F00"/><path d="M8 21C9 15.5 12 13 16 13L16 9.5L22 15L16 20.5L16 17C12.5 17 10 18.5 8 21Z" fill="#FBE6C0"/></svg>
<div class="t" style="left:488px;top:674.1px;font-size:20px;color:#1A5596;font-weight:700;">Drop 4</div>
<div class="t" style="left:488px;top:701.1px;font-size:20px;color:#444;">in 4h 5m - 05:00 PM</div>
<div class="a" style="left:769px;top:690px;width:20px;height:20px;background:#0A7F0A;border-radius:50%"></div>
<div class="t" style="left:799px;top:674.1px;font-size:20px;color:#1A5596;font-weight:700;">School Bus 4</div>
<div class="t" style="left:799px;top:701.1px;font-size:20px;color:#444;">03-09-2025 12:54:20 PM</div>
<div class="a" style="left:1089px;top:684px;width:25px;height:25px;background:#CC44AA;border-radius:50%"></div>
<div class="t" style="left:1089.0px;width:25px;text-align:center;top:690.3px;font-size:15px;color:#fff;font-weight:700;">D</div>
<div class="t" style="left:1137.0px;width:30px;text-align:center;top:687.1px;font-size:20px;color:#4DA64D;">0</div>
<div class="t" style="left:1179.5px;width:30px;text-align:center;top:687.1px;font-size:20px;color:#FF7F27;">0</div>
<div class="t" style="left:1222.0px;width:30px;text-align:center;top:687.1px;font-size:20px;color:#D9A010;">5</div>
<div class="t" style="left:1264.0px;width:30px;text-align:center;top:687.1px;font-size:20px;color:#FF0A0A;">0</div>
<div class="t" style="left:1307.0px;width:30px;text-align:center;top:687.1px;font-size:20px;color:#2323E8;">7</div>
<div class="a" style="left:1349px;top:682px;width:28px;height:28px;background:#D2D2D2;border:1.5px solid #7A7A7A;border-radius:50%"></div>
<div class="a" style="left:1355.5px;top:695px;width:3px;height:3px;background:#555;border-radius:50%"></div>
<div class="a" style="left:1361.5px;top:695px;width:3px;height:3px;background:#555;border-radius:50%"></div>
<div class="a" style="left:1367.5px;top:695px;width:3px;height:3px;background:#555;border-radius:50%"></div>
<div class="a" style="left:399px;top:736px;width:986px;height:74px;background:#D6E3FB;border-bottom:1px solid #DCDCDC"></div>
<div class="a" style="left:408px;top:758px;width:22px;height:22px;background:#EEF2FB;border:1px solid #D0D3D8"></div>
<div class="a" style="left:413px;top:768px;width:12px;height:1.5px;background:#C8C8C8"></div>
<svg class="a" style="left:443px;top:757px" width="30" height="30" viewBox="0 0 30 30"><circle cx="15" cy="15" r="14" fill="#1D62D6"/><path d="M9 15.5L13 19.5L21 11" fill="none" stroke="#fff" stroke-width="3"/></svg>
<div class="t" style="left:488px;top:749.1px;font-size:20px;color:#1A5596;font-weight:700;">Trip 1</div>
<div class="t" style="left:488px;top:776.1px;font-size:20px;color:#444;">1h 3m ago - 11:50 AM</div>
<div class="a" style="left:769px;top:765px;width:20px;height:20px;background:#0A7F0A;border-radius:50%"></div>
<div class="t" style="left:799px;top:749.1px;font-size:20px;color:#1A5596;font-weight:700;">School Bus 1</div>
<div class="t" style="left:799px;top:776.1px;font-size:20px;color:#444;">03-09-2025 12:54:20 PM</div>
<div class="a" style="left:1089px;top:759px;width:25px;height:25px;background:#FFB808;border-radius:50%"></div>
<div class="t" style="left:1089.0px;width:25px;text-align:center;top:765.3px;font-size:15px;color:#fff;font-weight:700;">P</div>
<div class="t" style="left:1137.0px;width:30px;text-align:center;top:762.1px;font-size:20px;color:#4DA64D;">4</div>
<div class="t" style="left:1179.5px;width:30px;text-align:center;top:762.1px;font-size:20px;color:#FF7F27;">0</div>
<div class="t" style="left:1222.0px;width:30px;text-align:center;top:762.1px;font-size:20px;color:#D9A010;">0</div>
<div class="t" style="left:1264.0px;width:30px;text-align:center;top:762.1px;font-size:20px;color:#FF0A0A;">1</div>
<div class="t" style="left:1307.0px;width:30px;text-align:center;top:762.1px;font-size:20px;color:#2323E8;">6</div>
<div class="a" style="left:1349px;top:757px;width:28px;height:28px;background:#D2D2D2;border:1.5px solid #7A7A7A;border-radius:50%"></div>
<div class="a" style="left:1355.5px;top:770px;width:3px;height:3px;background:#555;border-radius:50%"></div>
<div class="a" style="left:1361.5px;top:770px;width:3px;height:3px;background:#555;border-radius:50%"></div>
<div class="a" style="left:1367.5px;top:770px;width:3px;height:3px;background:#555;border-radius:50%"></div>
<div class="a" style="left:399px;top:810px;width:986px;height:75px;background:#fff;border-bottom:1px solid #DCDCDC"></div>
<div class="a" style="left:408px;top:832px;width:22px;height:22px;background:#fff;border:1px solid #D0D3D8"></div>
<div class="a" style="left:413px;top:842px;width:12px;height:1.5px;background:#C8C8C8"></div>
<svg class="a" style="left:443px;top:831px" width="30" height="30" viewBox="0 0 30 30"><circle cx="15" cy="15" r="14" fill="#C47F00"/><path d="M8 21C9 15.5 12 13 16 13L16 9.5L22 15L16 20.5L16 17C12.5 17 10 18.5 8 21Z" fill="#FBE6C0"/></svg>
<div class="t" style="left:488px;top:823.1px;font-size:20px;color:#1A5596;font-weight:700;">Drop 1</div>
<div class="t" style="left:488px;top:850.1px;font-size:20px;color:#444;">in 4h 5m - 05:00 PM</div>
<div class="a" style="left:769px;top:839px;width:20px;height:20px;background:#0A7F0A;border-radius:50%"></div>
<div class="t" style="left:799px;top:823.1px;font-size:20px;color:#1A5596;font-weight:700;">School Bus 1</div>
<div class="t" style="left:799px;top:850.1px;font-size:20px;color:#444;">03-09-2025 12:54:20 PM</div>
<div class="a" style="left:1089px;top:833px;width:25px;height:25px;background:#CC44AA;border-radius:50%"></div>
<div class="t" style="left:1089.0px;width:25px;text-align:center;top:839.3px;font-size:15px;color:#fff;font-weight:700;">D</div>
<div class="t" style="left:1137.0px;width:30px;text-align:center;top:836.1px;font-size:20px;color:#4DA64D;">0</div>
<div class="t" style="left:1179.5px;width:30px;text-align:center;top:836.1px;font-size:20px;color:#FF7F27;">0</div>
<div class="t" style="left:1222.0px;width:30px;text-align:center;top:836.1px;font-size:20px;color:#D9A010;">5</div>
<div class="t" style="left:1264.0px;width:30px;text-align:center;top:836.1px;font-size:20px;color:#FF0A0A;">0</div>
<div class="t" style="left:1307.0px;width:30px;text-align:center;top:836.1px;font-size:20px;color:#2323E8;">6</div>
<div class="a" style="left:1349px;top:831px;width:28px;height:28px;background:#D2D2D2;border:1.5px solid #7A7A7A;border-radius:50%"></div>
<div class="a" style="left:1355.5px;top:844px;width:3px;height:3px;background:#555;border-radius:50%"></div>
<div class="a" style="left:1361.5px;top:844px;width:3px;height:3px;background:#555;border-radius:50%"></div>
<div class="a" style="left:1367.5px;top:844px;width:3px;height:3px;background:#555;border-radius:50%"></div>
<div class="a" style="left:399px;top:885px;width:986px;height:74px;background:#fff;border-bottom:1px solid #DCDCDC"></div>
<div class="a" style="left:408px;top:907px;width:22px;height:22px;background:#fff;border:1px solid #D0D3D8"></div>
<div class="a" style="left:413px;top:917px;width:12px;height:1.5px;background:#C8C8C8"></div>
<svg class="a" style="left:443px;top:906px" width="30" height="30" viewBox="0 0 30 30"><circle cx="15" cy="15" r="14" fill="#C47F00"/><path d="M8 21C9 15.5 12 13 16 13L16 9.5L22 15L16 20.5L16 17C12.5 17 10 18.5 8 21Z" fill="#FBE6C0"/></svg>
<div class="t" style="left:488px;top:898.1px;font-size:20px;color:#1A5596;font-weight:700;">Drop 2</div>
<div class="t" style="left:488px;top:925.1px;font-size:20px;color:#444;">in 4h 5m - 05:00 PM</div>
<div class="a" style="left:769px;top:914px;width:20px;height:20px;background:#0A7F0A;border-radius:50%"></div>
<div class="t" style="left:799px;top:898.1px;font-size:20px;color:#1A5596;font-weight:700;">School Bus 2</div>
<div class="t" style="left:799px;top:925.1px;font-size:20px;color:#444;">03-09-2025 12:54:20 PM</div>
<div class="a" style="left:1089px;top:908px;width:25px;height:25px;background:#CC44AA;border-radius:50%"></div>
<div class="t" style="left:1089.0px;width:25px;text-align:center;top:914.3px;font-size:15px;color:#fff;font-weight:700;">D</div>
<div class="t" style="left:1137.0px;width:30px;text-align:center;top:911.1px;font-size:20px;color:#4DA64D;">0</div>
<div class="t" style="left:1179.5px;width:30px;text-align:center;top:911.1px;font-size:20px;color:#FF7F27;">0</div>
<div class="t" style="left:1222.0px;width:30px;text-align:center;top:911.1px;font-size:20px;color:#D9A010;">5</div>
<div class="t" style="left:1264.0px;width:30px;text-align:center;top:911.1px;font-size:20px;color:#FF0A0A;">0</div>
<div class="t" style="left:1307.0px;width:30px;text-align:center;top:911.1px;font-size:20px;color:#2323E8;">6</div>
<div class="a" style="left:1349px;top:906px;width:28px;height:28px;background:#D2D2D2;border:1.5px solid #7A7A7A;border-radius:50%"></div>
<div class="a" style="left:1355.5px;top:919px;width:3px;height:3px;background:#555;border-radius:50%"></div>
<div class="a" style="left:1361.5px;top:919px;width:3px;height:3px;background:#555;border-radius:50%"></div>
<div class="a" style="left:1367.5px;top:919px;width:3px;height:3px;background:#555;border-radius:50%"></div>
<div class="a" style="left:399px;top:959px;width:986px;height:74px;background:#fff;border-bottom:1px solid #DCDCDC"></div>
<div class="a" style="left:408px;top:981px;width:22px;height:22px;background:#fff;border:1px solid #D0D3D8"></div>
<div class="a" style="left:413px;top:991px;width:12px;height:1.5px;background:#C8C8C8"></div>
<svg class="a" style="left:443px;top:980px" width="30" height="30" viewBox="0 0 30 30"><circle cx="15" cy="15" r="14" fill="#C47F00"/><path d="M8 21C9 15.5 12 13 16 13L16 9.5L22 15L16 20.5L16 17C12.5 17 10 18.5 8 21Z" fill="#FBE6C0"/></svg>
<div class="t" style="left:488px;top:972.1px;font-size:20px;color:#1A5596;font-weight:700;">Drop 3</div>
<div class="t" style="left:488px;top:999.1px;font-size:20px;color:#444;">in 4h 5m - 05:00 PM</div>
<div class="a" style="left:769px;top:988px;width:20px;height:20px;background:#0A7F0A;border-radius:50%"></div>
<div class="t" style="left:799px;top:972.1px;font-size:20px;color:#1A5596;font-weight:700;">School Bus 3</div>
<div class="t" style="left:799px;top:999.1px;font-size:20px;color:#444;">03-09-2025 12:54:20 PM</div>
<div class="a" style="left:1089px;top:982px;width:25px;height:25px;background:#CC44AA;border-radius:50%"></div>
<div class="t" style="left:1089.0px;width:25px;text-align:center;top:988.3px;font-size:15px;color:#fff;font-weight:700;">D</div>
<div class="t" style="left:1137.0px;width:30px;text-align:center;top:985.1px;font-size:20px;color:#4DA64D;">0</div>
<div class="t" style="left:1179.5px;width:30px;text-align:center;top:985.1px;font-size:20px;color:#FF7F27;">0</div>
<div class="t" style="left:1222.0px;width:30px;text-align:center;top:985.1px;font-size:20px;color:#D9A010;">5</div>
<div class="t" style="left:1264.0px;width:30px;text-align:center;top:985.1px;font-size:20px;color:#FF0A0A;">0</div>
<div class="t" style="left:1307.0px;width:30px;text-align:center;top:985.1px;font-size:20px;color:#2323E8;">6</div>
<div class="a" style="left:1349px;top:980px;width:28px;height:28px;background:#D2D2D2;border:1.5px solid #7A7A7A;border-radius:50%"></div>
<div class="a" style="left:1355.5px;top:993px;width:3px;height:3px;background:#555;border-radius:50%"></div>
<div class="a" style="left:1361.5px;top:993px;width:3px;height:3px;background:#555;border-radius:50%"></div>
<div class="a" style="left:1367.5px;top:993px;width:3px;height:3px;background:#555;border-radius:50%"></div>
</div>
<svg class="a" style="left:1405px;top:420px" width="18" height="126" viewBox="0 0 18 126"><path d="M0 0L18 15L18 110L0 125Z" fill="#A9A9A9"/><path d="M14 51L7 60L14 69" fill="none" stroke="#fff" stroke-width="1.6"/></svg>
<div class="a" style="left:2579px;top:264px;width:55px;height:53px;background:#22418F;border-radius:11px;box-shadow:0 1px 4px rgba(0,0,0,.35)"></div>
<svg class="a" style="left:2593px;top:276px" width="28" height="28" viewBox="0 0 28 28"><path d="M4 4L13 14L4 24M13 4L22 14L13 24" fill="none" stroke="#fff" stroke-width="1.6"/></svg>
<div class="a" style="left:2661px;top:262px;width:314px;height:54px;background:#22418F;border-radius:10px;overflow:hidden;box-shadow:0 1px 4px rgba(0,0,0,.35)"></div>
<div class="a" style="left:2661px;top:262px;width:63px;height:54px;background:#fff;border-radius:10px 0 0 10px"></div>
<div class="a" style="left:2920px;top:262px;width:55px;height:54px;background:#4F78E0;border-radius:0 10px 10px 0"></div>
<svg class="a" style="left:2680px;top:276px" width="26" height="24" viewBox="0 0 26 24"><path d="M13 1C9 1 6.5 4 6.5 7.5C6.5 11.5 13 18 13 18C13 18 19.5 11.5 19.5 7.5C19.5 4 17 1 13 1Z" fill="#22418F"/><circle cx="13" cy="7.5" r="2.5" fill="#fff"/><ellipse cx="13" cy="19" rx="10" ry="3.5" fill="none" stroke="#22418F" stroke-width="1.8"/></svg>
<svg class="a" style="left:2743px;top:276px" width="26" height="22" viewBox="0 0 26 22"><g fill="#fff"><rect x="8" y="1" width="8" height="3"/><rect x="5" y="5" width="15" height="14" rx="2"/><rect x="1" y="8" width="4" height="8"/><rect x="20" y="7" width="5" height="10" rx="1"/></g><path d="M13 7L10 12L13 12L11 17" stroke="#22418F" stroke-width="1.6" fill="none"/></svg>
<svg class="a" style="left:2935px;top:276px" width="24" height="24" viewBox="0 0 24 24"><path d="M22.9 10.3 L22.9 13.7 L19.7 14.0 L18.9 16.1 L20.9 18.5 L18.5 20.9 L16.1 18.9 L14.0 19.7 L13.7 22.9 L10.3 22.9 L10.0 19.7 L7.9 18.9 L5.5 20.9 L3.1 18.5 L5.1 16.1 L4.3 14.0 L1.1 13.7 L1.1 10.3 L4.3 10.0 L5.1 7.9 L3.1 5.5 L5.5 3.1 L7.9 5.1 L10.0 4.3 L10.3 1.1 L13.7 1.1 L14.0 4.3 L16.1 5.1 L18.5 3.1 L20.9 5.5 L18.9 7.9 L19.7 10.0Z" fill="#fff"/><circle cx="12" cy="12" r="4.3" fill="#4F78E0"/></svg>
<div class="a" style="left:2579px;top:333px;width:56px;height:57px;background:#fff;box-shadow:0 0 2px rgba(0,0,0,.15)"></div>
<svg class="a" style="left:2592px;top:347px" width="30" height="30" viewBox="0 0 30 30"><circle cx="12" cy="12" r="9.5" fill="none" stroke="#333" stroke-width="2.2"/><path d="M19 19L27 27" stroke="#333" stroke-width="2.4" stroke-linecap="round"/></svg>
<div class="a" style="left:2579px;top:427px;width:55px;height:223px;background:#fff;border-radius:8px;box-shadow:0 0 3px rgba(0,0,0,.2)"></div>
<div class="a" style="left:2579px;top:483px;width:55px;height:1px;background:#E2E2E2"></div>
<div class="a" style="left:2579px;top:538px;width:55px;height:1px;background:#E2E2E2"></div>
<div class="a" style="left:2579px;top:594px;width:55px;height:56px;background:#DCDCDF;border-radius:0 0 8px 8px"></div>
<svg class="a" style="left:2588px;top:438px" width="36" height="34" viewBox="0 0 36 34"><path d="M10 2L12.5 9L20 9L14 13.5L16.5 21L10 16.5L3.5 21L6 13.5L0 9L7.5 9Z" fill="#fff" stroke="#333" stroke-width="1.2" transform="translate(1 3)"/><path d="M18 6L21.3 15L31 15L23.2 20.8L26.3 30L18 24.5L9.7 30L12.8 20.8L5 15L14.7 15Z" fill="#333"/></svg>
<svg class="a" style="left:2590px;top:492px" width="34" height="38" viewBox="0 0 34 38"><path d="M6 30C2 28 3 23 8 23C14 23 15 18 12 15C9 12 12 7 18 8C23 9 25 5 26 3" fill="none" stroke="#111" stroke-width="2.2"/><path d="M9 35C14 34 20 30 19 24C18 19 26 17 26 12" fill="none" stroke="#111" stroke-width="1.8" stroke-dasharray="2.5 2"/><circle cx="7" cy="30" r="3.3" fill="#fff" stroke="#111" stroke-width="1.8"/><path d="M28 1C25.5 1 24 3 24 5C24 7.5 28 11 28 11C28 11 32 7.5 32 5C32 3 30.5 1 28 1Z" fill="#fff" stroke="#111" stroke-width="1.5"/></svg>
<svg class="a" style="left:2594px;top:553px" width="26" height="26" viewBox="0 0 26 26"><path d="M2 4L8 2L17 5L24 3L24 22L17 24L8 21L2 23Z" fill="none" stroke="#111" stroke-width="2.2" stroke-linejoin="round"/><path d="M8 2L8 21M17 5L17 24" stroke="#111" stroke-width="2"/><path d="M10 5L15 6.5L15 21L10 19.5Z" fill="#111"/></svg>
<svg class="a" style="left:2589px;top:608px" width="36" height="30" viewBox="0 0 36 30"><path d="M7 7C4.5 7 3 9 3 11C3 14 7 18 7 18C7 18 11 14 11 11C11 9 9.5 7 7 7Z" fill="#111"/><circle cx="7" cy="11" r="1.6" fill="#DCDCDF"/><path d="M28 1C25.5 1 24 3 24 5C24 8 28 12 28 12C28 12 32 8 32 5C32 3 30.5 1 28 1Z" fill="#111"/><circle cx="28" cy="5" r="1.6" fill="#DCDCDF"/><path d="M26 13C24 13 17 14 17 17C17 20 24 20 23 23C22 26 14 26 12 26" fill="none" stroke="#111" stroke-width="2"/></svg>
<div class="a" style="left:2582px;top:670px;width:53px;height:109px;background:#fff;border-radius:8px;box-shadow:0 0 3px rgba(0,0,0,.2)"></div>
<div class="a" style="left:2582px;top:724px;width:53px;height:1px;background:#DDD"></div>
<div class="a" style="left:2598px;top:696px;width:21px;height:3.5px;background:#111"></div>
<div class="a" style="left:2606.8px;top:687.5px;width:3.5px;height:21px;background:#111"></div>
<div class="a" style="left:2599px;top:748px;width:19px;height:3px;background:#111"></div>
<div class="a" style="left:2582px;top:797px;width:53px;height:54px;background:#fff;border-radius:8px;box-shadow:0 0 3px rgba(0,0,0,.2)"></div>
<svg class="a" style="left:2595px;top:809px" width="28" height="30" viewBox="0 0 28 30"><path d="M2 2L2 28L26 28" fill="none" stroke="#111" stroke-width="4"/><path d="M5 2L26 2L26 25" fill="none" stroke="#111" stroke-width="2.4"/><g stroke="#fff" stroke-width="1"><path d="M2 6L4 6M2 11L4 11M2 16L4 16M2 21L4 21M7 28L7 26M12 28L12 26M17 28L17 26M22 28L22 26"/></g></svg>
<div class="a" style="left:2660px;top:335px;width:314px;height:180px;background:#fff;border-radius:0 0 10px 10px;box-shadow:0 1px 5px rgba(0,0,0,.3);overflow:hidden"></div>
<div class="a" style="left:2660px;top:470px;width:314px;height:45px;background:#F3F3F5;border-top:1.5px solid #DADADA;border-radius:0 0 10px 10px"></div>
<div class="t" style="left:2679px;top:355.1px;font-size:20px;color:#555;">Trip Duration</div>
<div class="t" style="left:2554.5px;width:400px;text-align:right;top:355.1px;font-size:20px;color:#444;font-weight:700;">01:14</div>
<div class="t" style="left:2679px;top:391.1px;font-size:20px;color:#555;">Total Distance</div>
<div class="t" style="left:2554.5px;width:400px;text-align:right;top:391.1px;font-size:20px;color:#444;font-weight:700;">70.16 km</div>
<div class="t" style="left:2679px;top:427.4px;font-size:20px;color:#555;">Validity</div>
<div class="t" style="left:2554.5px;width:400px;text-align:right;top:427.4px;font-size:20px;color:#444;font-weight:700;">31-12-2025</div>
<svg class="a" style="left:2705px;top:484px" width="18" height="17" viewBox="0 0 18 17"><path d="M2 1L2 17" stroke="#22418F" stroke-width="2.6"/><path d="M3 1L16 7.5L3 14Z" fill="#22418F"/></svg>
<div class="t" style="left:2733px;top:483.5px;font-size:19.5px;color:#22418F;font-weight:700;">Show Checkpoint List</div>
<div class="a" style="left:2661px;top:531px;width:313px;height:392px;background:#fff;border-radius:10px 10px 10px 10px;box-shadow:0 1px 5px rgba(0,0,0,.3);overflow:hidden"></div>
<div class="t" style="left:2681px;top:562.7px;font-size:22px;color:#444;">Number Of Trips</div>
<div class="t" style="left:2870px;top:562.7px;font-size:22px;color:#444;font-weight:700;">2</div>
<svg class="a" style="left:2926px;top:559px" width="26" height="17" viewBox="0 0 26 17"><path d="M3 14L13 4L23 14" fill="none" stroke="#333" stroke-width="2.4"/></svg>
<div class="a" style="left:2661px;top:604px;width:313px;height:9px;background:#CFCFCF"></div>
<div class="a" style="left:2661px;top:758px;width:313px;height:9px;background:#CFCFCF"></div>
<div class="t" style="left:2671px;top:631.5px;font-size:18px;color:#333;font-weight:700;">Trip 1</div>
<div class="t" style="left:2671px;top:660.2px;font-size:17.5px;color:#2BAA5A;font-weight:700;">PICKUP</div>
<svg class="a" style="left:2820px;top:623px" width="152" height="36" viewBox="0 0 152 36"><path d="M0 0L152 0L152 36L0 36L16 18Z" fill="#FF7A1C"/></svg>
<div class="t" style="left:2551.7px;width:400px;text-align:right;top:631.9px;font-size:18.5px;color:#fff;font-weight:700;">Partially</div>
<div class="t" style="left:2671px;top:700.8px;font-size:19.5px;color:#1E90FF;transform:scaleX(.78);transform-origin:0 0">EST</div>
<div class="t" style="left:2706.5px;top:700.8px;font-size:19.5px;color:#333;letter-spacing:-0.3px">10:30 AM</div>
<div class="t" style="left:2671px;top:727.9px;font-size:19.5px;color:#6CBF4A;transform:scaleX(.78);transform-origin:0 0">ACT</div>
<div class="t" style="left:2710px;top:727.9px;font-size:19.5px;color:#333;letter-spacing:-0.3px">10:29 AM</div>
<svg class="a" style="left:2789px;top:711px" width="22" height="4" viewBox="0 0 22 4"><path d="M0 2L22 2" stroke="#CFC4C4" stroke-width="3" stroke-dasharray="4 2"/></svg>
<svg class="a" style="left:2789px;top:736px" width="22" height="4" viewBox="0 0 22 4"><path d="M0 2L22 2" stroke="#CFC4C4" stroke-width="3" stroke-dasharray="4 2"/></svg>
<svg class="a" style="left:2856px;top:711px" width="22" height="4" viewBox="0 0 22 4"><path d="M0 2L22 2" stroke="#CFC4C4" stroke-width="3" stroke-dasharray="4 2"/></svg>
<svg class="a" style="left:2856px;top:734px" width="22" height="4" viewBox="0 0 22 4"><path d="M0 2L22 2" stroke="#CFC4C4" stroke-width="3" stroke-dasharray="4 2"/></svg>
<svg class="a" style="left:2813px;top:700px" width="42" height="50" viewBox="0 0 42 50"><rect x="5" y="3" width="32" height="40" rx="6" fill="#E9A92A"/><rect x="7" y="1.5" width="28" height="6" rx="3" fill="#E9A92A"/><rect x="9" y="3" width="4" height="2" fill="#D4602A"/><rect x="29" y="3" width="4" height="2" fill="#D4602A"/><rect x="8" y="9" width="12" height="12" rx="1" fill="#2E3E4E"/><rect x="22" y="9" width="12" height="12" rx="1" fill="#2E3E4E"/><rect x="1" y="10" width="4" height="9" rx="2" fill="#333"/><rect x="37" y="10" width="4" height="9" rx="2" fill="#333"/><rect x="13" y="26" width="16" height="10" rx="1" fill="#7A5A20"/><path d="M15 27L15 35M18 27L18 35M21 27L21 35M24 27L24 35M27 27L27 35" stroke="#E9A92A" stroke-width="0.8"/><circle cx="9" cy="31" r="2" fill="#3A4A5A"/><circle cx="33" cy="31" r="2" fill="#3A4A5A"/><rect x="5" y="38" width="32" height="5" rx="2" fill="#56636E"/><rect x="7" y="42" width="6" height="8" rx="2" fill="#2E3E4E"/><rect x="29" y="42" width="6" height="8" rx="2" fill="#2E3E4E"/></svg>
<div class="t" style="left:2559.4px;width:400px;text-align:right;top:700.8px;font-size:19.5px;color:#333;">02:00 PM</div>
<div class="t" style="left:2559.4px;width:400px;text-align:right;top:727.9px;font-size:19.5px;color:#333;">11:50 AM</div>
<div class="t" style="left:2671px;top:785.8px;font-size:18px;color:#333;font-weight:700;">Drop 1</div>
<div class="t" style="left:2671px;top:813.6px;font-size:17.5px;color:#EE1122;font-weight:700;">DROP</div>
<svg class="a" style="left:2820px;top:777px" width="152" height="36" viewBox="0 0 152 36"><path d="M0 0L152 0L152 36L0 36L16 18Z" fill="#C97B00"/></svg>
<div class="t" style="left:2551.7px;width:400px;text-align:right;top:785.9px;font-size:18.5px;color:#fff;font-weight:700;">Upcoming</div>
<div class="t" style="left:2671px;top:854.0px;font-size:19.5px;color:#1E90FF;transform:scaleX(.78);transform-origin:0 0">EST</div>
<div class="t" style="left:2706.5px;top:854.0px;font-size:19.5px;color:#333;letter-spacing:-0.3px">05:00 PM</div>
<div class="t" style="left:2671px;top:882.0px;font-size:19.5px;color:#6CBF4A;transform:scaleX(.78);transform-origin:0 0">ACT</div>
<div class="t" style="left:2710px;top:882.0px;font-size:19.5px;color:#333;">--</div>
<svg class="a" style="left:2789px;top:864px" width="22" height="4" viewBox="0 0 22 4"><path d="M0 2L22 2" stroke="#CFC4C4" stroke-width="3" stroke-dasharray="4 2"/></svg>
<svg class="a" style="left:2789px;top:891px" width="22" height="4" viewBox="0 0 22 4"><path d="M0 2L22 2" stroke="#CFC4C4" stroke-width="3" stroke-dasharray="4 2"/></svg>
<svg class="a" style="left:2856px;top:864px" width="22" height="4" viewBox="0 0 22 4"><path d="M0 2L22 2" stroke="#CFC4C4" stroke-width="3" stroke-dasharray="4 2"/></svg>
<svg class="a" style="left:2856px;top:888px" width="22" height="4" viewBox="0 0 22 4"><path d="M0 2L22 2" stroke="#CFC4C4" stroke-width="3" stroke-dasharray="4 2"/></svg>
<svg class="a" style="left:2813px;top:854px" width="42" height="50" viewBox="0 0 42 50"><rect x="5" y="3" width="32" height="40" rx="6" fill="#E9A92A"/><rect x="7" y="1.5" width="28" height="6" rx="3" fill="#E9A92A"/><rect x="9" y="3" width="4" height="2" fill="#D4602A"/><rect x="29" y="3" width="4" height="2" fill="#D4602A"/><rect x="8" y="9" width="12" height="12" rx="1" fill="#2E3E4E"/><rect x="22" y="9" width="12" height="12" rx="1" fill="#2E3E4E"/><rect x="1" y="10" width="4" height="9" rx="2" fill="#333"/><rect x="37" y="10" width="4" height="9" rx="2" fill="#333"/><rect x="13" y="26" width="16" height="10" rx="1" fill="#7A5A20"/><path d="M15 27L15 35M18 27L18 35M21 27L21 35M24 27L24 35M27 27L27 35" stroke="#E9A92A" stroke-width="0.8"/><circle cx="9" cy="31" r="2" fill="#3A4A5A"/><circle cx="33" cy="31" r="2" fill="#3A4A5A"/><rect x="5" y="38" width="32" height="5" rx="2" fill="#56636E"/><rect x="7" y="42" width="6" height="8" rx="2" fill="#2E3E4E"/><rect x="29" y="42" width="6" height="8" rx="2" fill="#2E3E4E"/></svg>
<div class="t" style="left:2559.4px;width:400px;text-align:right;top:854.0px;font-size:19.5px;color:#333;">09:00 PM</div>
<div class="t" style="left:2559.4px;width:400px;text-align:right;top:882.0px;font-size:19.5px;color:#333;">--</div>
<div class="a" style="left:2661px;top:941px;width:313px;height:60px;background:linear-gradient(180deg,#fff,#F2F2F2);border-radius:10px 10px 0 0;box-shadow:0 0 4px rgba(0,0,0,.3)"></div>
<div class="a" style="left:372px;top:770px;width:2618px;height:134px;background:linear-gradient(180deg,rgba(0,0,0,0) 0%,rgba(0,0,0,.09) 100%)"></div>
<div class="a" style="left:1875px;top:850px;width:634px;height:120px;background:#fff;border-radius:10px 10px 0 0;box-shadow:0 0 4px rgba(0,0,0,.25);overflow:hidden"></div>
<div class="a" style="left:1875px;top:850px;width:634px;height:47px;background:#E60000;border-radius:10px 10px 0 0"></div>
<div class="t" style="left:1894px;top:863.7px;font-size:22px;color:#fff;">Missed</div>
<svg class="a" style="left:2467px;top:862px" width="25" height="23" viewBox="0 0 25 23"><path d="M3 2L22 21M22 2L3 21" stroke="#fff" stroke-width="4"/></svg>
<div class="a" style="left:1875px;top:897px;width:634px;height:7px;background:#D0D0D0"></div>
<div class="a" style="left:1948px;top:904px;width:561px;height:38px;background:#E5E5E5"></div>
<div class="t" style="left:1894px;top:909.8px;font-size:20px;color:#555;">Live</div>
<div class="t" style="left:1972px;top:909.8px;font-size:20px;color:#555;">Students</div>
<div class="t" style="left:1894px;top:958.1px;font-size:20px;color:#666;">Arrival Time</div>
<div class="a" style="left:2981px;top:500px;width:7px;height:110px;background:#C6C6C6;border-radius:2px"></div>
<div class="a" style="left:1161px;top:916px;width:1727px;height:49px;background:linear-gradient(180deg,rgba(0,0,0,.03),rgba(0,0,0,0))"></div>
<div class="a" style="left:372px;top:965px;width:2608px;height:600px;background:#fff"></div>
<svg class="a" style="left:372px;top:916px" width="800" height="52" viewBox="0 0 800 52"><rect x="0" y="0" width="49" height="49" fill="#22418F"/><rect x="49" y="0" width="171" height="49" fill="#fff"/><path d="M220 0L266 0L316 49L220 49Z" fill="#22418F"/><path d="M266 0L741 0L789 49L316 49Z" fill="#EEEEEE"/><path d="M741 0L789 49" stroke="rgba(0,0,0,.12)" stroke-width="3"/><rect x="316" y="49" width="473" height="2" fill="rgba(0,0,0,.06)"/></svg>
<svg class="a" style="left:390px;top:926px" width="22" height="25" viewBox="0 0 22 25"><rect x="1.5" y="3" width="17" height="21" rx="2" fill="#fff" stroke="#9DB4E8" stroke-width="1"/><rect x="6" y="1" width="8" height="4" rx="1.5" fill="#fff" stroke="#9DB4E8" stroke-width="1"/><path d="M4.5 9L6 10.5L8 8M4.5 14L6 15.5L8 13M4.5 19L6 20.5L8 18" stroke="#5577CC" stroke-width="1" fill="none"/><path d="M10 9.5L16 9.5M10 14.5L16 14.5M10 19.5L16 19.5" stroke="#8899BB" stroke-width="1.2"/></svg>
<svg class="a" style="left:431px;top:928px" width="21" height="25" viewBox="0 0 21 25"><path d="M1 5L10.5 1L20 5L10.5 9Z" fill="#4F78E0"/><path d="M4.5 6.5L4.5 9.5C4.5 13 7 15.5 10.5 15.5C14 15.5 16.5 13 16.5 9.5L16.5 6.5L10.5 9Z" fill="#4F78E0"/><path d="M2 5.5L2 9" stroke="#4F78E0" stroke-width="1.2"/><path d="M1 24C1 19.5 4.5 17 10.5 17C16.5 17 20 19.5 20 24Z" fill="#4F78E0"/></svg>
<div class="t" style="left:462.7px;top:930.1px;font-size:22px;color:#5A7BE8;">Student List</div>
<div class="a" style="left:708px;top:925px;width:224px;height:33px;background:#fff;border-radius:8px"></div>
<div class="t" style="left:717px;top:931.2px;font-size:21px;color:#444;font-weight:700;letter-spacing:0.25px">Partially Completed</div>
<div class="a" style="left:936px;top:925px;width:172px;height:33px;background:#fff;border-radius:4px"></div>
<div class="t" style="left:946px;top:931.2px;font-size:21px;color:#444;letter-spacing:0.4px">1 hrs 4 min ago</div>
<svg class="a" style="left:2887px;top:916px" width="93" height="49" viewBox="0 0 93 49"><path d="M47 0L93 0L93 49L0 49Z" fill="#22418F"/><path d="M66 12L86 32M86 12L66 32" stroke="#fff" stroke-width="4"/></svg>
<div class="t" style="left:387.4px;top:996.9px;font-size:22px;color:#444;font-weight:700;">Estimated</div>
<div class="a" style="left:523px;top:988px;width:3px;height:39px;background:#BDBDBD"></div>
<div class="a" style="left:523px;top:987.5px;width:35px;height:2.5px;background:#BDBDBD"></div>
<div class="a" style="left:523px;top:1025px;width:35px;height:2.5px;background:#BDBDBD"></div>
<svg class="a" style="left:512px;top:1000px" width="25" height="14" viewBox="0 0 25 14"><path d="M0 0L25 0L12.5 14Z" fill="#22418F"/></svg>
<div class="t" style="left:587px;top:984.1px;font-size:20px;color:#333;">03-09-2025 10:30 AM</div>
<div class="t" style="left:587px;top:1011.6px;font-size:20px;color:#777;">03-09-2025 02:00 PM</div>
<div class="t" style="left:801px;top:997.4px;font-size:22px;color:#444;font-weight:700;">Actual</div>
<div class="a" style="left:897px;top:988px;width:3px;height:39px;background:#BDBDBD"></div>
<div class="a" style="left:897px;top:987.5px;width:35px;height:2.5px;background:#BDBDBD"></div>
<div class="a" style="left:897px;top:1025px;width:35px;height:2.5px;background:#BDBDBD"></div>
<svg class="a" style="left:886px;top:1000px" width="25" height="14" viewBox="0 0 25 14"><path d="M0 0L25 0L12.5 14Z" fill="#2D9B2D"/></svg>
<div class="t" style="left:961.4px;top:983.8px;font-size:20px;color:#222;">03-09-2025 10:29 AM</div>
<div class="t" style="left:961.4px;top:1011.6px;font-size:20px;color:#777;">03-09-2025 11:50 AM</div>
<div class="a" style="left:372px;top:1049px;width:2608px;height:81px;background:#E6E6E6;border-bottom:1px solid #D2D2D2"></div>
<div class="t" style="left:381.7px;top:1079.7px;font-size:21px;color:#444;font-weight:700;">Index</div>
<div class="t" style="left:554.7px;top:1079.7px;font-size:21px;color:#444;font-weight:700;">Student Name</div>
<div class="t" style="left:797.3px;top:1079.7px;font-size:21px;color:#444;font-weight:700;">Class</div>
<div class="t" style="left:1139.5px;top:1079.7px;font-size:21px;color:#444;font-weight:700;">Division</div>
<div class="t" style="left:1483.2px;top:1079.7px;font-size:21px;color:#444;font-weight:700;">Checkpoint</div>
<div class="t" style="left:1829.2px;top:1079.7px;font-size:21px;color:#444;font-weight:700;">Address</div>
<div class="t" style="left:1940.4px;top:1079.7px;font-size:21px;color:#444;font-weight:700;">Reached Time</div>
<div class="t" style="left:2284.5px;top:1079.7px;font-size:21px;color:#444;font-weight:700;">Actual Halt</div>
<div class="t" style="left:2458.4px;top:1079.7px;font-size:21px;color:#444;font-weight:700;">Attendance</div>
<div class="t" style="left:2636.3px;top:1065.7px;font-size:21px;color:#444;font-weight:700;">Onboarded</div>
<div class="t" style="left:2636.3px;top:1093.0px;font-size:21px;color:#444;font-weight:700;">Time</div>
<div class="t" style="left:2814.3px;top:1065.7px;font-size:21px;color:#444;font-weight:700;">Deboarded</div>
<div class="t" style="left:2814.3px;top:1093.0px;font-size:21px;color:#444;font-weight:700;">Time</div>
<div class="a" style="left:372px;top:1130px;width:2608px;height:185px;background:#DCFCFC;border-bottom:1.5px solid #DADADA"></div>
<div class="a" style="left:372px;top:1315px;width:2608px;height:184px;background:#fff;border-bottom:1.5px solid #DADADA"></div>
<div class="t" style="left:1829.2px;top:1144.8px;font-size:20px;color:#555;">US 36</div>
<div class="t" style="left:1829.2px;top:1172.2px;font-size:20px;color:#555;">Cheyenne</div>
<div class="t" style="left:1829.2px;top:1199.6px;font-size:20px;color:#555;">County</div>
<div class="t" style="left:1829.2px;top:1227.0px;font-size:20px;color:#555;">Kansas</div>
<div class="t" style="left:1829.2px;top:1254.4px;font-size:20px;color:#555;">United</div>
<div class="t" style="left:1829.2px;top:1281.8px;font-size:20px;color:#555;">States</div>
<div class="t" style="left:381.7px;top:1214.1px;font-size:20px;color:#555;">1</div>
<div class="t" style="left:554.7px;top:1214.1px;font-size:20px;color:#555;">Evelyn B A</div>
<div class="t" style="left:797.3px;top:1214.1px;font-size:20px;color:#555;">6</div>
<div class="t" style="left:1139.5px;top:1214.1px;font-size:20px;color:#555;">B</div>
<div class="t" style="left:1483.2px;top:1214.1px;font-size:20px;color:#555;">Point 1</div>
<div class="t" style="left:1940.4px;top:1214.1px;font-size:20px;color:#555;">--</div>
<div class="t" style="left:2284.5px;top:1214.1px;font-size:20px;color:#555;">00:00</div>
<div class="t" style="left:2458.4px;top:1214.1px;font-size:20px;color:#22AA33;">P</div>
<div class="t" style="left:2636.3px;top:1214.1px;font-size:20px;color:#555;">10:37 AM</div>
<div class="t" style="left:2814.3px;top:1214.1px;font-size:20px;color:#555;">--</div>
<div class="t" style="left:1829.2px;top:1329.8px;font-size:20px;color:#555;">US 36</div>
<div class="t" style="left:1829.2px;top:1357.2px;font-size:20px;color:#555;">Cheyenne</div>
<div class="t" style="left:1829.2px;top:1384.6px;font-size:20px;color:#555;">County</div>
<div class="t" style="left:1829.2px;top:1412.0px;font-size:20px;color:#555;">Kansas</div>
<div class="t" style="left:1829.2px;top:1439.4px;font-size:20px;color:#555;">United</div>
<div class="t" style="left:1829.2px;top:1466.8px;font-size:20px;color:#555;">States</div>
<div class="t" style="left:381.7px;top:1399.1px;font-size:20px;color:#555;">2</div>
<div class="t" style="left:554.7px;top:1399.1px;font-size:20px;color:#555;">Ava B A</div>
<div class="t" style="left:797.3px;top:1399.1px;font-size:20px;color:#555;">6</div>
<div class="t" style="left:1139.5px;top:1399.1px;font-size:20px;color:#555;">B</div>
<div class="t" style="left:1483.2px;top:1399.1px;font-size:20px;color:#555;">Point 1</div>
<div class="t" style="left:1940.4px;top:1399.1px;font-size:20px;color:#555;">--</div>
<div class="t" style="left:2284.5px;top:1399.1px;font-size:20px;color:#555;">00:00</div>
<div class="t" style="left:2458.4px;top:1399.1px;font-size:20px;color:#22AA33;">P</div>
<div class="t" style="left:2636.3px;top:1399.1px;font-size:20px;color:#555;">10:37 AM</div>
<div class="t" style="left:2814.3px;top:1399.1px;font-size:20px;color:#555;">--</div>
<div class="t" style="left:1829.2px;top:1513.8px;font-size:20px;color:#555;">US 36</div>
<div class="t" style="left:1829.2px;top:1541.2px;font-size:20px;color:#555;">Cheyenne</div>
<div class="t" style="left:1829.2px;top:1568.6px;font-size:20px;color:#555;">County</div>
<div class="t" style="left:1829.2px;top:1596.0px;font-size:20px;color:#555;">Kansas</div>
<div class="t" style="left:1829.2px;top:1623.4px;font-size:20px;color:#555;">United</div>
<div class="t" style="left:1829.2px;top:1650.8px;font-size:20px;color:#555;">States</div>
<div class="a" style="left:360px;top:904px;width:2632px;height:660px;border:12px solid #FF0000"></div>
<div class="a" style="left:3031px;top:650px;width:169px;height:910px;background:linear-gradient(90deg,rgba(0,40,110,.13) 0,rgba(0,40,110,.05) 50px,rgba(0,0,0,0) 130px);-webkit-mask-image:linear-gradient(180deg,transparent 0,#000 45%)"></div>
<div class="a" style="left:2990px;top:700px;width:39px;height:860px;background:linear-gradient(180deg,rgba(60,70,90,0) 0,rgba(60,70,90,.16) 60%,rgba(60,70,90,.2) 100%)"></div>
</body></html>
